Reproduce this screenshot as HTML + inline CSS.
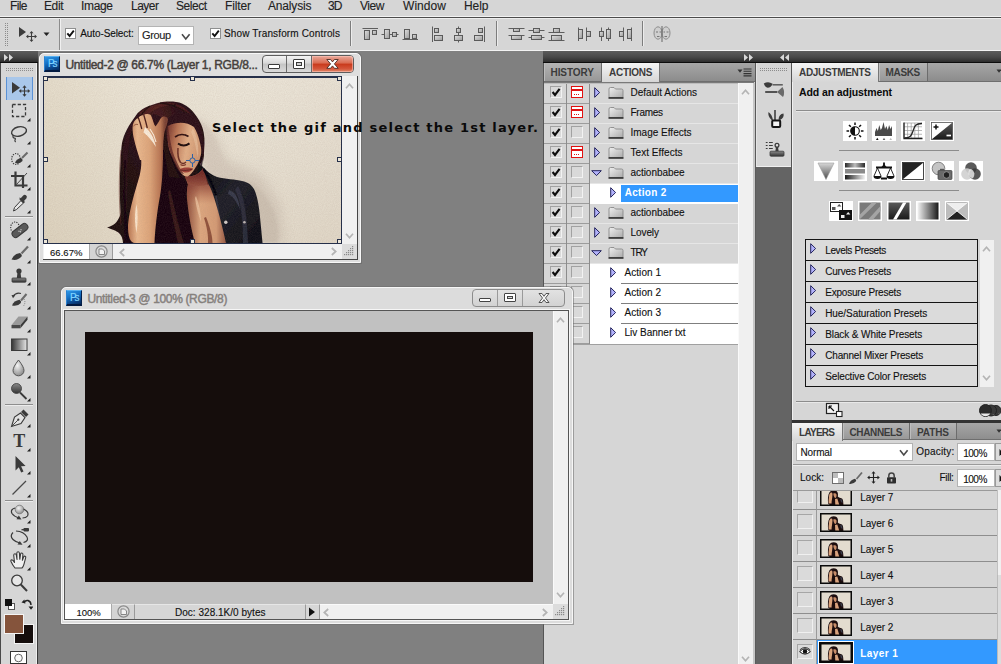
<!DOCTYPE html>
<html lang="en"><head><meta charset="utf-8"><title>Photoshop</title>
<style>
html,body{margin:0;padding:0}
body{width:1001px;height:664px;overflow:hidden;background:#808080;position:relative;
font-family:"Liberation Sans",sans-serif;font-size:10px;color:#111}
#app{position:absolute;left:0;top:0;width:1001px;height:664px;overflow:hidden;background:#808080}
#app div,#app span,#app svg{position:absolute;box-sizing:border-box}
#app span{white-space:nowrap}
</style></head>
<body><div id="app">
<div style="left:0px;top:0px;width:1001px;height:16px;background:#d6d6d6"></div>
<div style="left:0px;top:16px;width:1001px;height:1px;background:#f2f2f2"></div>
<div style="left:0px;top:17px;width:1001px;height:1px;background:#4c4c4c"></div>
<span style="left:10.00px;top:0px;font-size:12px;line-height:12px;color:#222;letter-spacing:-0.612px;-webkit-text-stroke:0.12px #222;">File</span>
<span style="left:44.00px;top:0px;font-size:12px;line-height:12px;color:#222;letter-spacing:-0.393px;-webkit-text-stroke:0.12px #222;">Edit</span>
<span style="left:81.00px;top:0px;font-size:12px;line-height:12px;color:#222;letter-spacing:-0.338px;-webkit-text-stroke:0.12px #222;">Image</span>
<span style="left:131.00px;top:0px;font-size:12px;line-height:12px;color:#222;letter-spacing:-0.505px;-webkit-text-stroke:0.12px #222;">Layer</span>
<span style="left:176.00px;top:0px;font-size:12px;line-height:12px;color:#222;letter-spacing:-0.470px;-webkit-text-stroke:0.12px #222;">Select</span>
<span style="left:225.00px;top:0px;font-size:12px;line-height:12px;color:#222;letter-spacing:-0.133px;-webkit-text-stroke:0.12px #222;">Filter</span>
<span style="left:268.00px;top:0px;font-size:12px;line-height:12px;color:#222;letter-spacing:-0.169px;-webkit-text-stroke:0.12px #222;">Analysis</span>
<span style="left:328.00px;top:0px;font-size:12px;line-height:12px;color:#222;letter-spacing:-0.840px;-webkit-text-stroke:0.12px #222;">3D</span>
<span style="left:360.00px;top:0px;font-size:12px;line-height:12px;color:#222;letter-spacing:-0.431px;-webkit-text-stroke:0.12px #222;">View</span>
<span style="left:403.00px;top:0px;font-size:12px;line-height:12px;color:#222;letter-spacing:0.064px;-webkit-text-stroke:0.12px #222;">Window</span>
<span style="left:464.00px;top:0px;font-size:12px;line-height:12px;color:#222;letter-spacing:-0.060px;-webkit-text-stroke:0.12px #222;">Help</span>
<div style="left:0px;top:18px;width:1001px;height:32px;background:#d6d6d6"></div>
<div style="left:0px;top:18px;width:1001px;height:1px;background:#ececec"></div>
<div style="left:0px;top:50px;width:1001px;height:1px;background:#f2f2f2"></div>
<div style="left:5px;top:23px;width:1px;height:24px;background:repeating-linear-gradient(180deg,#8c8c8c 0 1px,transparent 1px 2px)"></div>
<div style="left:7px;top:23px;width:1px;height:24px;background:repeating-linear-gradient(180deg,#8c8c8c 0 1px,transparent 1px 2px)"></div>
<svg style="left:18px;top:26px;" width="20" height="16" viewBox="0 0 20 16"><path d="M1 1 L1 11 L8 6 Z" fill="#3c3c3c"/><path d="M13.5 6 v9 M9 10.5 h9" stroke="#3c3c3c" stroke-width="1.1" fill="none"/><path d="M13.5 5 l-2 2.3 h4z M13.5 16 l-2 -2.3 h4z M8 10.5 l2.3 -2 v4z M19 10.5 l-2.3 -2 v4z" fill="#3c3c3c"/></svg>
<svg style="left:43px;top:32px;" width="8" height="5" viewBox="0 0 8 5"><path d="M0.5 0.5 h6 l-3 3.6z" fill="#222"/></svg>
<div style="left:59px;top:19px;width:1px;height:31px;background:#8c8c8c"></div>
<div style="left:60px;top:19px;width:1px;height:31px;background:#f0f0f0"></div>
<div style="left:65px;top:28px;width:11px;height:11px;background:#fff;border:1px solid #8e8f8f"></div>
<svg style="left:65px;top:28px;" width="11" height="11" viewBox="0 0 11 11"><path d="M2.3 5.4 L4.6 8 L8.8 2.6" stroke="#111" stroke-width="1.9" fill="none"/></svg>
<span style="left:80.20px;top:29px;font-size:10px;line-height:10px;color:#111;letter-spacing:-0.089px;-webkit-text-stroke:0.12px #111;">Auto-Select:</span>
<div style="left:138px;top:26px;width:56px;height:19px;background:#fff;border:1px solid #b4b4b4"></div>
<span style="left:142.00px;top:30px;font-size:11px;line-height:11px;color:#222;letter-spacing:-0.393px;-webkit-text-stroke:0.12px #222;">Group</span>
<svg style="left:181px;top:33px;" width="10" height="8" viewBox="0 0 10 8"><path d="M1 1.2 L4.8 6 L8.6 1.2" stroke="#4a4a4a" stroke-width="1.6" fill="none"/></svg>
<div style="left:210px;top:28px;width:11px;height:11px;background:#fff;border:1px solid #8e8f8f"></div>
<svg style="left:210px;top:28px;" width="11" height="11" viewBox="0 0 11 11"><path d="M2.3 5.4 L4.6 8 L8.8 2.6" stroke="#111" stroke-width="1.9" fill="none"/></svg>
<span style="left:224.00px;top:29px;font-size:10px;line-height:10px;color:#111;letter-spacing:0.144px;-webkit-text-stroke:0.12px #111;">Show Transform Controls</span>
<div style="left:350px;top:21px;width:1px;height:25px;background:#7d7d7d"></div>
<div style="left:351px;top:21px;width:1px;height:25px;background:#ececec"></div>
<div style="left:496px;top:21px;width:1px;height:25px;background:#7d7d7d"></div>
<div style="left:497px;top:21px;width:1px;height:25px;background:#ececec"></div>
<div style="left:642px;top:21px;width:1px;height:25px;background:#7d7d7d"></div>
<div style="left:643px;top:21px;width:1px;height:25px;background:#ececec"></div>
<svg style="left:362px;top:27px;" width="18" height="14" viewBox="0 0 18 14"><defs><linearGradient id="gb" x1="0" y1="0" x2="1" y2="1"><stop offset="0" stop-color="#e0e0e0"/><stop offset="1" stop-color="#9a9a9a"/></linearGradient></defs><path d="M0.5 1.5 h15.5" stroke="#5e5e5e"/><rect x="2.5" y="3.5" width="5" height="9" fill="url(#gb)" stroke="#5a5a5a" stroke-width="1"/><rect x="10.5" y="3.5" width="4" height="4" fill="url(#gb)" stroke="#5a5a5a" stroke-width="1"/></svg>
<svg style="left:381px;top:27px;" width="18" height="14" viewBox="0 0 18 14"><path d="M0.5 7.5 h17" stroke="#5e5e5e"/><rect x="3.5" y="2.5" width="5" height="9" fill="url(#gb)" stroke="#5a5a5a" stroke-width="1"/><rect x="11.5" y="5.5" width="4" height="4" fill="url(#gb)" stroke="#5a5a5a" stroke-width="1"/></svg>
<svg style="left:402px;top:27px;" width="18" height="14" viewBox="0 0 18 14"><path d="M0.5 12.5 h15.5" stroke="#5e5e5e"/><rect x="2.5" y="2.5" width="5" height="9" fill="url(#gb)" stroke="#5a5a5a" stroke-width="1"/><rect x="10.5" y="7.5" width="4" height="4" fill="url(#gb)" stroke="#5a5a5a" stroke-width="1"/></svg>
<svg style="left:431px;top:26px;" width="14" height="17" viewBox="0 0 14 17"><path d="M1.5 0.5 v15.5" stroke="#5e5e5e"/><rect x="3.5" y="2.5" width="4" height="4" fill="url(#gb)" stroke="#5a5a5a" stroke-width="1"/><rect x="3.5" y="9.5" width="8" height="5" fill="url(#gb)" stroke="#5a5a5a" stroke-width="1"/></svg>
<svg style="left:452px;top:26px;" width="14" height="17" viewBox="0 0 14 17"><path d="M6.5 0.5 v16" stroke="#5e5e5e"/><rect x="4.5" y="2.5" width="4" height="4" fill="url(#gb)" stroke="#5a5a5a" stroke-width="1"/><rect x="2.5" y="9.5" width="8" height="5" fill="url(#gb)" stroke="#5a5a5a" stroke-width="1"/></svg>
<svg style="left:472px;top:26px;" width="14" height="17" viewBox="0 0 14 17"><path d="M12.5 0.5 v15.5" stroke="#5e5e5e"/><rect x="6.5" y="2.5" width="4" height="4" fill="url(#gb)" stroke="#5a5a5a" stroke-width="1"/><rect x="2.5" y="9.5" width="8" height="5" fill="url(#gb)" stroke="#5a5a5a" stroke-width="1"/></svg>
<svg style="left:508px;top:26px;" width="18" height="17" viewBox="0 0 18 17"><path d="M0.5 2.5 h16 M0.5 9.5 h16" stroke="#5e5e5e"/><rect x="5.5" y="2.5" width="6" height="3" fill="url(#gb)" stroke="#5a5a5a" stroke-width="1"/><rect x="3.5" y="9.5" width="10" height="4" fill="url(#gb)" stroke="#5a5a5a" stroke-width="1"/></svg>
<svg style="left:528px;top:26px;" width="18" height="17" viewBox="0 0 18 17"><path d="M0.5 4.5 h16 M0.5 11.5 h16" stroke="#5e5e5e"/><rect x="5.5" y="2.5" width="6" height="4" fill="url(#gb)" stroke="#5a5a5a" stroke-width="1"/><rect x="3.5" y="9.5" width="10" height="4" fill="url(#gb)" stroke="#5a5a5a" stroke-width="1"/></svg>
<svg style="left:548px;top:26px;" width="18" height="17" viewBox="0 0 18 17"><path d="M0.5 6.5 h16 M0.5 14.5 h16" stroke="#5e5e5e"/><rect x="5.5" y="2.5" width="6" height="4" fill="url(#gb)" stroke="#5a5a5a" stroke-width="1"/><rect x="3.5" y="9.5" width="10" height="5" fill="url(#gb)" stroke="#5a5a5a" stroke-width="1"/></svg>
<svg style="left:577px;top:27px;" width="16" height="15" viewBox="0 0 16 15"><path d="M1.5 0.5 v13.5 M9.5 0.5 v13.5" stroke="#5e5e5e"/><rect x="1.5" y="2.5" width="4" height="9" fill="url(#gb)" stroke="#5a5a5a" stroke-width="1"/><rect x="9.5" y="4.5" width="4" height="5" fill="url(#gb)" stroke="#5a5a5a" stroke-width="1"/></svg>
<svg style="left:597px;top:27px;" width="16" height="15" viewBox="0 0 16 15"><path d="M4.5 0.5 v13.5 M11.5 0.5 v13.5" stroke="#5e5e5e"/><rect x="2.5" y="4.5" width="4" height="5" fill="url(#gb)" stroke="#5a5a5a" stroke-width="1"/><rect x="9.5" y="2.5" width="4" height="9" fill="url(#gb)" stroke="#5a5a5a" stroke-width="1"/></svg>
<svg style="left:617px;top:27px;" width="16" height="15" viewBox="0 0 16 15"><path d="M6.5 0.5 v13.5 M14.5 0.5 v13.5" stroke="#5e5e5e"/><rect x="2.5" y="4.5" width="4" height="5" fill="url(#gb)" stroke="#5a5a5a" stroke-width="1"/><rect x="10.5" y="2.5" width="4" height="9" fill="url(#gb)" stroke="#5a5a5a" stroke-width="1"/></svg>
<svg style="left:653px;top:26px;" width="18" height="16" viewBox="0 0 18 16"><ellipse cx="5" cy="7" rx="4" ry="6.2" fill="#cfcfcf" stroke="#8c8c8c"/><ellipse cx="13" cy="7" rx="4" ry="6.2" fill="#cfcfcf" stroke="#8c8c8c"/><path d="M9 0 v16" stroke="#666"/><path d="M3 6 h2 M6.5 6 h1.5 M10.5 6 h1.5 M13.5 6 h2 M4 10.5 h2.5 M11.5 10.5 h2.5" stroke="#777"/></svg>
<div style="left:0px;top:51px;width:38px;height:12px;background:linear-gradient(#5c5c5c,#484848 50%,#2e2e2e 88%,#0c0c0c 92%)"></div>
<svg style="left:4px;top:54px;" width="10" height="7" viewBox="0 0 10 7"><path d="M0 0 l4 3.5 l-4 3.5z M5 0 l4 3.5 l-4 3.5z" fill="#d8d8d8"/></svg>
<div style="left:543px;top:51px;width:458px;height:12px;background:linear-gradient(#5c5c5c,#484848 50%,#2e2e2e 88%,#0c0c0c 92%)"></div>
<svg style="left:744px;top:54px;" width="10" height="7" viewBox="0 0 10 7"><path d="M0 0 l4 3.5 l-4 3.5z M5 0 l4 3.5 l-4 3.5z" fill="#d8d8d8"/></svg>
<svg style="left:780px;top:54px;" width="10" height="7" viewBox="0 0 10 7"><path d="M4 0 l-4 3.5 l4 3.5z M9 0 l-4 3.5 l4 3.5z" fill="#d8d8d8"/></svg>
<div style="left:543px;top:63px;width:458px;height:601px;background:#646464"></div>
<div style="left:0px;top:63px;width:38px;height:601px;background:#d6d6d6;border-left:1px solid #4a4a4a;border-right:1px solid #383838"></div>
<div style="left:36px;top:63px;width:1px;height:601px;background:#efefef"></div>
<div style="left:6px;top:68px;width:28px;height:1px;background:repeating-linear-gradient(90deg,#8c8c8c 0 1px,transparent 1px 2px)"></div>
<div style="left:6px;top:70px;width:28px;height:1px;background:repeating-linear-gradient(90deg,#8c8c8c 0 1px,transparent 1px 2px)"></div>
<div style="left:6px;top:77px;width:27px;height:23px;background:#a9c7ea;border-left:1px solid #5b92d6;border-right:1px solid #5b92d6"></div>
<div style="left:5px;top:216px;width:28px;height:1px;background:#8e8e8e"></div>
<div style="left:5px;top:217px;width:28px;height:1px;background:#ececec"></div>
<div style="left:5px;top:404px;width:28px;height:1px;background:#8e8e8e"></div>
<div style="left:5px;top:405px;width:28px;height:1px;background:#ececec"></div>
<div style="left:5px;top:500px;width:28px;height:1px;background:#8e8e8e"></div>
<div style="left:5px;top:501px;width:28px;height:1px;background:#ececec"></div>
<svg style="left:0px;top:0px;" width="1" height="1" viewBox="0 0 1 1"><defs><linearGradient id="tg" x1="0" y1="0" x2="0" y2="1"><stop offset="0" stop-color="#8a8a8a"/><stop offset="1" stop-color="#333"/></linearGradient><linearGradient id="th" x1="0" y1="0" x2="1" y2="0"><stop offset="0" stop-color="#333"/><stop offset="1" stop-color="#e8e8e8"/></linearGradient><radialGradient id="tr" cx="0.4" cy="0.35" r="0.7"><stop offset="0" stop-color="#f4f4f4"/><stop offset="1" stop-color="#8a8a8a"/></radialGradient></defs></svg>
<svg style="left:7px;top:76.5px;" width="24" height="24" viewBox="0 0 24 24"><path d="M5 5 L5 16.5 L13 10.8 Z" fill="#3a3a3a"/><path d="M17.5 9.5 v9 M13 14 h9" stroke="#3a3a3a" stroke-width="1.1"/><path d="M17.5 8.3 l-2.1 2.4 h4.2z M17.5 19.7 l-2.1 -2.4 h4.2z M11.8 14 l2.4 -2.1 v4.2z M23.2 14 l-2.4 -2.1 v4.2z" fill="#3a3a3a"/></svg>
<svg style="left:7px;top:99px;" width="24" height="24" viewBox="0 0 24 24"><rect x="5.5" y="5.5" width="13" height="12" fill="none" stroke="#3a3a3a" stroke-width="1.3" stroke-dasharray="3.2 2"/></svg>
<svg style="left:26.5px;top:117.5px;" width="4" height="4" viewBox="0 0 4 4"><path d="M3.500 0 V3.500 H0z" fill="#222"/></svg>
<svg style="left:7px;top:122px;" width="24" height="24" viewBox="0 0 24 24"><ellipse cx="12" cy="9.5" rx="7.6" ry="4.6" transform="rotate(-14 12 9.5)" fill="none" stroke="#3a3a3a" stroke-width="1.4"/><path d="M6.5 13 q-1.5 2.5 1 3.2 q1.5 0 0.5 1.8 q-0.6 1.3 0.8 2" fill="none" stroke="#3a3a3a" stroke-width="1.2"/></svg>
<svg style="left:26.5px;top:140.5px;" width="4" height="4" viewBox="0 0 4 4"><path d="M3.500 0 V3.500 H0z" fill="#222"/></svg>
<svg style="left:7px;top:145.5px;" width="24" height="24" viewBox="0 0 24 24"><ellipse cx="9" cy="13" rx="4.3" ry="5.5" fill="none" stroke="#3a3a3a" stroke-width="1.2" stroke-dasharray="1.2 1.2"/><path d="M8 17 q1 -4 6 -5 q2 1 1.5 3 q-3 3.5 -7.500 2z" fill="#3a3a3a"/><path d="M15 12 L20.5 6.5" stroke="#6a6a6a" stroke-width="2"/></svg>
<svg style="left:26.5px;top:164.0px;" width="4" height="4" viewBox="0 0 4 4"><path d="M3.500 0 V3.500 H0z" fill="#222"/></svg>
<svg style="left:7px;top:168px;" width="24" height="24" viewBox="0 0 24 24"><path d="M8.500 3.500 v14 h12 M4 8 h12 v12" fill="none" stroke="#3a3a3a" stroke-width="2.2"/><path d="M9.500 16.500 L20 5" stroke="#3a3a3a" stroke-width="0.9"/></svg>
<svg style="left:26.5px;top:186.5px;" width="4" height="4" viewBox="0 0 4 4"><path d="M3.500 0 V3.500 H0z" fill="#222"/></svg>
<svg style="left:7px;top:191px;" width="24" height="24" viewBox="0 0 24 24"><path d="M6.500 20 l1 -3.500 l6.500 -7 l2.500 2.500 l-7 6.500z" fill="#e6e6e6" stroke="#3a3a3a" stroke-width="1"/><path d="M12.500 8.500 l4 4 l1.500 -1.500 l-1 -1 l2.500 -2.800 q1 -2 -0.500 -3 q-1.500 -1 -2.800 0.300 l-2.500 2.700 l-1 -1z" fill="#3a3a3a"/></svg>
<svg style="left:26.5px;top:209.5px;" width="4" height="4" viewBox="0 0 4 4"><path d="M3.500 0 V3.500 H0z" fill="#222"/></svg>
<svg style="left:7px;top:218px;" width="24" height="24" viewBox="0 0 24 24"><ellipse cx="8" cy="9.500" rx="4.300" ry="5.500" fill="none" stroke="#3a3a3a" stroke-width="1.100" stroke-dasharray="1.200 1.200"/><rect x="4" y="9" width="18" height="7" rx="3.300" transform="rotate(-38 13 12.500)" fill="#5a5a5a" stroke="#3a3a3a"/><circle cx="12" cy="13.300" r="0.700" fill="#ccc"/><circle cx="14" cy="11.700" r="0.700" fill="#ccc"/><circle cx="13.500" cy="13.800" r="0.700" fill="#ccc"/></svg>
<svg style="left:26.5px;top:236.5px;" width="4" height="4" viewBox="0 0 4 4"><path d="M3.500 0 V3.500 H0z" fill="#222"/></svg>
<svg style="left:7px;top:241px;" width="24" height="24" viewBox="0 0 24 24"><path d="M4.500 18.500 q2 -5.500 8.500 -6.500 q2.500 1.500 1.500 3.500 q-4 4.500 -10 3z" fill="#3a3a3a"/><path d="M14.500 12.500 L21 5.500" stroke="#6a6a6a" stroke-width="2.200"/></svg>
<svg style="left:26.5px;top:259.5px;" width="4" height="4" viewBox="0 0 4 4"><path d="M3.500 0 V3.500 H0z" fill="#222"/></svg>
<svg style="left:7px;top:263.5px;" width="24" height="24" viewBox="0 0 24 24"><circle cx="12" cy="7" r="2.600" fill="#3a3a3a"/><path d="M10.600 8 h2.800 l0.800 6 h-4.400z" fill="#3a3a3a"/><rect x="5" y="14" width="14" height="4.200" rx="0.800" fill="url(#tg)" stroke="#3a3a3a" stroke-width="0.800"/></svg>
<svg style="left:26.5px;top:282.0px;" width="4" height="4" viewBox="0 0 4 4"><path d="M3.500 0 V3.500 H0z" fill="#222"/></svg>
<svg style="left:7px;top:287px;" width="24" height="24" viewBox="0 0 24 24"><path d="M5 18.500 q2 -5 7.500 -5.800 q2.300 1.300 1.400 3.200 q-3.600 4 -8.900 2.600z" fill="#3a3a3a"/><path d="M14 13.500 L19.500 7" stroke="#6a6a6a" stroke-width="2"/><path d="M6 9.500 q3 -4.500 8 -3" fill="none" stroke="#3a3a3a" stroke-width="1.200"/><path d="M4.500 8 l3.800 0.300 l-2.300 3z" fill="#3a3a3a"/><path d="M17 12 q2 3.500 -0.500 7" fill="none" stroke="#777" stroke-width="1" stroke-dasharray="1 1.200"/></svg>
<svg style="left:26.5px;top:305.5px;" width="4" height="4" viewBox="0 0 4 4"><path d="M3.500 0 V3.500 H0z" fill="#222"/></svg>
<svg style="left:7px;top:310px;" width="24" height="24" viewBox="0 0 24 24"><path d="M4.500 15 l7 -8.500 h9 l-7 8.500z" fill="#9a9a9a"/><path d="M4.500 15 h9 v3.300 h-9z" fill="#4a4a4a"/><path d="M13.500 15 l7 -8.500 v3.300 l-7 8.500z" fill="#3a3a3a"/></svg>
<svg style="left:26.5px;top:328.5px;" width="4" height="4" viewBox="0 0 4 4"><path d="M3.500 0 V3.500 H0z" fill="#222"/></svg>
<svg style="left:7px;top:333px;" width="24" height="24" viewBox="0 0 24 24"><rect x="4.500" y="6" width="15.500" height="11.500" fill="url(#th)" stroke="#3a3a3a" stroke-width="1"/></svg>
<svg style="left:26.5px;top:351.5px;" width="4" height="4" viewBox="0 0 4 4"><path d="M3.500 0 V3.500 H0z" fill="#222"/></svg>
<svg style="left:7px;top:356px;" width="24" height="24" viewBox="0 0 24 24"><path d="M11.500 4 q5.500 7 5.500 10.500 a5.500 5.300 0 0 1 -11 0 q0 -3.500 5.500 -10.500z" fill="url(#tr)" stroke="#555" stroke-width="1"/></svg>
<svg style="left:26.5px;top:374.5px;" width="4" height="4" viewBox="0 0 4 4"><path d="M3.500 0 V3.500 H0z" fill="#222"/></svg>
<svg style="left:7px;top:379px;" width="24" height="24" viewBox="0 0 24 24"><circle cx="9.500" cy="9.500" r="5" fill="url(#tg)" stroke="#3a3a3a" stroke-width="0.800"/><path d="M13 13.500 L19.500 20" stroke="#3a3a3a" stroke-width="1.800"/></svg>
<svg style="left:26.5px;top:397.5px;" width="4" height="4" viewBox="0 0 4 4"><path d="M3.500 0 V3.500 H0z" fill="#222"/></svg>
<svg style="left:7px;top:405.5px;" width="24" height="24" viewBox="0 0 24 24"><path d="M4.500 20.500 l3 -9.500 l6 -4 l4.500 4.500 l-4 6z" fill="#e2e2e2" stroke="#3a3a3a" stroke-width="1.100"/><path d="M5 20 l5.800 -5.800" stroke="#3a3a3a" stroke-width="0.900"/><circle cx="11.300" cy="13.700" r="1.100" fill="#3a3a3a"/><path d="M14 6 l2.500 -2.500 l5 5 l-2.500 2.500z" fill="#3a3a3a"/></svg>
<svg style="left:26.5px;top:424.0px;" width="4" height="4" viewBox="0 0 4 4"><path d="M3.500 0 V3.500 H0z" fill="#222"/></svg>
<span style="left:13.20px;top:432px;font-size:18px;line-height:18px;color:#3a3a3a;font-weight:700;font-family:'Liberation Serif',serif;">T</span>
<svg style="left:26.5px;top:447.5px;" width="4" height="4" viewBox="0 0 4 4"><path d="M3.500 0 V3.500 H0z" fill="#222"/></svg>
<svg style="left:7px;top:452px;" width="24" height="24" viewBox="0 0 24 24"><path d="M8.500 4 v14.500 l3.300 -3.200 l2.400 5.200 l2.300 -1 l-2.400 -5.200 l4.500 -0.300z" fill="#3a3a3a"/></svg>
<svg style="left:26.5px;top:470.5px;" width="4" height="4" viewBox="0 0 4 4"><path d="M3.500 0 V3.500 H0z" fill="#222"/></svg>
<svg style="left:7px;top:475px;" width="24" height="24" viewBox="0 0 24 24"><path d="M5.500 19.500 L19 6" stroke="#4a4a4a" stroke-width="1.300"/></svg>
<svg style="left:26.5px;top:493.5px;" width="4" height="4" viewBox="0 0 4 4"><path d="M3.500 0 V3.500 H0z" fill="#222"/></svg>
<svg style="left:7px;top:501px;" width="24" height="24" viewBox="0 0 24 24"><circle cx="12.500" cy="8.500" r="4.300" fill="url(#tr)" stroke="#777" stroke-width="0.800"/><path d="M8 7 q-5 1.500 -3 5.500 q2 3 7 4.500 M16.500 8 q6 3 4 7 q-1.500 2 -5 2" fill="none" stroke="#3a3a3a" stroke-width="1.200"/><path d="M14.500 18.500 l-5 -0.300 l2.300 -3.600z" fill="#3a3a3a"/></svg>
<svg style="left:26.5px;top:519.5px;" width="4" height="4" viewBox="0 0 4 4"><path d="M3.500 0 V3.500 H0z" fill="#222"/></svg>
<svg style="left:7px;top:525px;" width="24" height="24" viewBox="0 0 24 24"><path d="M6 7.500 q-3.500 3.500 0 7 q2.500 2.500 7 3.500 M9 6 q8 0.500 11 6 q2 4 -3.500 5.500" fill="none" stroke="#3a3a3a" stroke-width="1.200"/><path d="M15.500 19.800 l-5 -0.300 l2.300 -3.600z" fill="#3a3a3a"/><rect x="16.500" y="3" width="5.500" height="3.400" rx="0.800" fill="#3a3a3a"/><path d="M14.500 4.700 h2.500" stroke="#3a3a3a" stroke-width="1.300"/></svg>
<svg style="left:26.5px;top:543.5px;" width="4" height="4" viewBox="0 0 4 4"><path d="M3.500 0 V3.500 H0z" fill="#222"/></svg>
<svg style="left:7px;top:548px;" width="24" height="24" viewBox="0 0 24 24"><path d="M8 20 q-2.500 -3 -4 -6.500 q-0.500 -1.500 0.800 -1.800 q1.200 0 2.700 2.800 l-0.800 -7.500 q0.200 -1.300 1.300 -1.300 q1 0 1.300 1.200 l0.700 4.600 l-0.200 -6.500 q0.200 -1.200 1.300 -1.200 q1.100 0 1.300 1.200 l0.400 6.300 l0.800 -5.300 q0.300 -1.100 1.300 -1 q1.100 0.200 1 1.400 l-0.500 5.800 l1.300 -3.300 q0.500 -1 1.400 -0.700 q0.900 0.400 0.600 1.500 l-1.700 6.500 q-0.700 2.800 -2 3.800z" fill="#f0f0f0" stroke="#3a3a3a" stroke-width="1.100" stroke-linejoin="round"/></svg>
<svg style="left:26.5px;top:566.5px;" width="4" height="4" viewBox="0 0 4 4"><path d="M3.500 0 V3.500 H0z" fill="#222"/></svg>
<svg style="left:7px;top:571px;" width="24" height="24" viewBox="0 0 24 24"><circle cx="10" cy="9.500" r="5.300" fill="#e6e6e6" stroke="#3a3a3a" stroke-width="1.300"/><path d="M13.800 13.500 L20 20" stroke="#3a3a3a" stroke-width="2"/></svg>
<div style="left:8px;top:603px;width:7px;height:7px;background:#fff;border:1px solid #555"></div>
<div style="left:5px;top:599px;width:7px;height:7px;background:#111;border:1px solid #111"></div>
<svg style="left:21px;top:598px;" width="12" height="12" viewBox="0 0 12 12"><path d="M3 5 q1 -3 4 -2.500 q3 1 3 4.500" fill="none" stroke="#222" stroke-width="1.400"/><path d="M0.500 4.500 l2.800 -3 l1.200 4z M7.500 8.500 h5 l-2.500 3.200z" fill="#222"/></svg>
<div style="left:14px;top:624px;width:20px;height:20px;background:#150d0c;border:1px solid #f4f4f4"></div>
<div style="left:4px;top:614px;width:20px;height:20px;background:#85543c;border:1px solid #f4f4f4"></div>
<div style="left:10px;top:651px;width:17px;height:13px;background:#fff;border:1px solid #333"></div>
<svg style="left:13px;top:653px;" width="11" height="11" viewBox="0 0 11 11"><circle cx="5.500" cy="5" r="3.800" fill="#f8f8f8" stroke="#555" stroke-width="0.900"/></svg>
<div style="left:543px;top:63px;width:213px;height:601px;background:#d6d6d6;border-left:1px solid #555;border-right:1px solid #5a5a5a"></div>
<div style="left:544px;top:63px;width:211px;height:18px;background:linear-gradient(#a6a6a6,#8c8c8c)"></div>
<div style="left:544px;top:63px;width:58px;height:18px;background:linear-gradient(#b4b4b4,#979797);border-right:1px solid #6c6c6c;border-left:1px solid #bdbdbd"></div>
<div style="left:602px;top:63px;width:58px;height:19px;background:linear-gradient(#f4f4f4,#d6d6d6);border-right:1px solid #777"></div>
<div style="left:544px;top:81px;width:58px;height:1px;background:#6e6e6e"></div>
<div style="left:660px;top:81px;width:95px;height:1px;background:#6e6e6e"></div>
<span style="left:550.50px;top:68px;font-size:10px;line-height:10px;color:#3b3b3b;font-weight:700;letter-spacing:-0.066px;">HISTORY</span>
<span style="left:609.00px;top:68px;font-size:10px;line-height:10px;color:#3b3b3b;font-weight:700;letter-spacing:-0.250px;">ACTIONS</span>
<svg style="left:737px;top:68px;" width="15" height="9" viewBox="0 0 15 9"><path d="M0.500 1.500 h5 l-2.500 3.200z" fill="#333"/><path d="M6.500 1 h8 M6.500 3.300 h8 M6.500 5.600 h8 M6.500 7.900 h8" stroke="#333" stroke-width="1.100"/></svg>
<div style="left:544px;top:82px;width:210px;height:2px;background:linear-gradient(#7a7a7a 50%,#bdbdbd 50%)"></div>
<div style="left:738px;top:83px;width:15px;height:581px;background:#f0f0f0;border-left:1px solid #fafafa"></div>
<div style="left:753px;top:83px;width:2px;height:581px;background:#c6c6c6"></div>
<svg style="left:741px;top:89px;" width="9" height="6" viewBox="0 0 9 6"><path d="M1 5.200 L4.500 1.300 L8 5.200" stroke="#b4b4b4" stroke-width="1.700" fill="none"/></svg>
<svg style="left:741px;top:656px;" width="9" height="6" viewBox="0 0 9 6"><path d="M1 0.800 L4.500 4.700 L8 0.800" stroke="#b4b4b4" stroke-width="1.700" fill="none"/></svg>
<svg style="left:0px;top:0px;" width="1" height="1" viewBox="0 0 1 1"><defs><linearGradient id="fg" x1="0" y1="0" x2="1" y2="1"><stop offset="0" stop-color="#f0f0f0"/><stop offset="1" stop-color="#aaaaaa"/></linearGradient></defs></svg>
<div style="left:544px;top:84px;width:22px;height:20px;background:#d6d6d6;border-bottom:1px solid #9c9c9c"></div>
<div style="left:566px;top:84px;width:1px;height:20px;background:#8c8c8c"></div>
<div style="left:567px;top:84px;width:22px;height:20px;background:#d6d6d6;border-bottom:1px solid #9c9c9c"></div>
<div style="left:589px;top:84px;width:1px;height:20px;background:#8c8c8c"></div>
<div style="left:550px;top:86px;width:12px;height:12px;background:#d9d9d9;border:1px solid;border-color:#a2a2a2 #f2f2f2 #f2f2f2 #a2a2a2"></div>
<div style="left:571px;top:86px;width:12px;height:12px;background:#d9d9d9;border:1px solid;border-color:#a2a2a2 #f2f2f2 #f2f2f2 #a2a2a2"></div>
<svg style="left:550px;top:86px;" width="12" height="12" viewBox="0 0 12 12"><path d="M2.600 6 L5 9 L9.600 2.800" stroke="#0c0c0c" stroke-width="2.100" fill="none"/></svg>
<div style="left:571px;top:86px;width:12px;height:12px;background:#fff;border:1.500px solid #e01212"></div>
<div style="left:572px;top:89px;width:10px;height:1.5px;background:#e01212"></div>
<div style="left:574.3px;top:93.5px;width:1.2px;height:1.2px;background:#e01212"></div>
<div style="left:576.3px;top:93.5px;width:1.2px;height:1.2px;background:#e01212"></div>
<div style="left:578.3px;top:93.5px;width:1.2px;height:1.2px;background:#e01212"></div>
<div style="left:590px;top:84px;width:148px;height:20px;background:#d6d6d6;border-bottom:1px solid #e6e6e6"></div>
<svg style="left:594px;top:87px;" width="7" height="11" viewBox="0 0 7 11"><path d="M0.700 0.700 V10.300 L5.600 5.500 Z" fill="#b2b2fa" stroke="#1a1a55" stroke-width="0.950" stroke-linejoin="round"/></svg>
<svg style="left:608px;top:86px;" width="16" height="13" viewBox="0 0 16 13"><path d="M1 11.500 V3 q0 -1.500 1.500 -1.500 h3.500 l1.500 1.500 h6 q1.500 0 1.500 1.500 V11.500 Z" fill="url(#fg)" stroke="#8a8a8a" stroke-width="0.900"/><path d="M0.500 12 h15" stroke="#1c1c1c" stroke-width="1.400"/></svg>
<span style="left:630.50px;top:88px;font-size:10px;line-height:10px;color:#111;letter-spacing:-0.015px;-webkit-text-stroke:0.12px #111;">Default Actions</span>
<div style="left:544px;top:104px;width:22px;height:20px;background:#d6d6d6;border-bottom:1px solid #9c9c9c"></div>
<div style="left:566px;top:104px;width:1px;height:20px;background:#8c8c8c"></div>
<div style="left:567px;top:104px;width:22px;height:20px;background:#d6d6d6;border-bottom:1px solid #9c9c9c"></div>
<div style="left:589px;top:104px;width:1px;height:20px;background:#8c8c8c"></div>
<div style="left:550px;top:106px;width:12px;height:12px;background:#d9d9d9;border:1px solid;border-color:#a2a2a2 #f2f2f2 #f2f2f2 #a2a2a2"></div>
<div style="left:571px;top:106px;width:12px;height:12px;background:#d9d9d9;border:1px solid;border-color:#a2a2a2 #f2f2f2 #f2f2f2 #a2a2a2"></div>
<svg style="left:550px;top:106px;" width="12" height="12" viewBox="0 0 12 12"><path d="M2.600 6 L5 9 L9.600 2.800" stroke="#0c0c0c" stroke-width="2.100" fill="none"/></svg>
<div style="left:571px;top:106px;width:12px;height:12px;background:#fff;border:1.500px solid #e01212"></div>
<div style="left:572px;top:109px;width:10px;height:1.5px;background:#e01212"></div>
<div style="left:574.3px;top:113.5px;width:1.2px;height:1.2px;background:#e01212"></div>
<div style="left:576.3px;top:113.5px;width:1.2px;height:1.2px;background:#e01212"></div>
<div style="left:578.3px;top:113.5px;width:1.2px;height:1.2px;background:#e01212"></div>
<div style="left:590px;top:104px;width:148px;height:20px;background:#d6d6d6;border-bottom:1px solid #e6e6e6"></div>
<svg style="left:594px;top:107px;" width="7" height="11" viewBox="0 0 7 11"><path d="M0.700 0.700 V10.300 L5.600 5.500 Z" fill="#b2b2fa" stroke="#1a1a55" stroke-width="0.950" stroke-linejoin="round"/></svg>
<svg style="left:608px;top:106px;" width="16" height="13" viewBox="0 0 16 13"><path d="M1 11.500 V3 q0 -1.500 1.500 -1.500 h3.500 l1.500 1.500 h6 q1.500 0 1.500 1.500 V11.500 Z" fill="url(#fg)" stroke="#8a8a8a" stroke-width="0.900"/><path d="M0.500 12 h15" stroke="#1c1c1c" stroke-width="1.400"/></svg>
<span style="left:630.50px;top:108px;font-size:10px;line-height:10px;color:#111;letter-spacing:-0.279px;-webkit-text-stroke:0.12px #111;">Frames</span>
<div style="left:544px;top:124px;width:22px;height:20px;background:#d6d6d6;border-bottom:1px solid #9c9c9c"></div>
<div style="left:566px;top:124px;width:1px;height:20px;background:#8c8c8c"></div>
<div style="left:567px;top:124px;width:22px;height:20px;background:#d6d6d6;border-bottom:1px solid #9c9c9c"></div>
<div style="left:589px;top:124px;width:1px;height:20px;background:#8c8c8c"></div>
<div style="left:550px;top:126px;width:12px;height:12px;background:#d9d9d9;border:1px solid;border-color:#a2a2a2 #f2f2f2 #f2f2f2 #a2a2a2"></div>
<div style="left:571px;top:126px;width:12px;height:12px;background:#d9d9d9;border:1px solid;border-color:#a2a2a2 #f2f2f2 #f2f2f2 #a2a2a2"></div>
<svg style="left:550px;top:126px;" width="12" height="12" viewBox="0 0 12 12"><path d="M2.600 6 L5 9 L9.600 2.800" stroke="#0c0c0c" stroke-width="2.100" fill="none"/></svg>
<div style="left:590px;top:124px;width:148px;height:20px;background:#d6d6d6;border-bottom:1px solid #e6e6e6"></div>
<svg style="left:594px;top:127px;" width="7" height="11" viewBox="0 0 7 11"><path d="M0.700 0.700 V10.300 L5.600 5.500 Z" fill="#b2b2fa" stroke="#1a1a55" stroke-width="0.950" stroke-linejoin="round"/></svg>
<svg style="left:608px;top:126px;" width="16" height="13" viewBox="0 0 16 13"><path d="M1 11.500 V3 q0 -1.500 1.500 -1.500 h3.500 l1.500 1.500 h6 q1.500 0 1.500 1.500 V11.500 Z" fill="url(#fg)" stroke="#8a8a8a" stroke-width="0.900"/><path d="M0.500 12 h15" stroke="#1c1c1c" stroke-width="1.400"/></svg>
<span style="left:630.50px;top:128px;font-size:10px;line-height:10px;color:#111;letter-spacing:0.004px;-webkit-text-stroke:0.12px #111;">Image Effects</span>
<div style="left:544px;top:144px;width:22px;height:20px;background:#d6d6d6;border-bottom:1px solid #9c9c9c"></div>
<div style="left:566px;top:144px;width:1px;height:20px;background:#8c8c8c"></div>
<div style="left:567px;top:144px;width:22px;height:20px;background:#d6d6d6;border-bottom:1px solid #9c9c9c"></div>
<div style="left:589px;top:144px;width:1px;height:20px;background:#8c8c8c"></div>
<div style="left:550px;top:146px;width:12px;height:12px;background:#d9d9d9;border:1px solid;border-color:#a2a2a2 #f2f2f2 #f2f2f2 #a2a2a2"></div>
<div style="left:571px;top:146px;width:12px;height:12px;background:#d9d9d9;border:1px solid;border-color:#a2a2a2 #f2f2f2 #f2f2f2 #a2a2a2"></div>
<svg style="left:550px;top:146px;" width="12" height="12" viewBox="0 0 12 12"><path d="M2.600 6 L5 9 L9.600 2.800" stroke="#0c0c0c" stroke-width="2.100" fill="none"/></svg>
<div style="left:571px;top:146px;width:12px;height:12px;background:#fff;border:1.500px solid #e01212"></div>
<div style="left:572px;top:149px;width:10px;height:1.5px;background:#e01212"></div>
<div style="left:574.3px;top:153.5px;width:1.2px;height:1.2px;background:#e01212"></div>
<div style="left:576.3px;top:153.5px;width:1.2px;height:1.2px;background:#e01212"></div>
<div style="left:578.3px;top:153.5px;width:1.2px;height:1.2px;background:#e01212"></div>
<div style="left:590px;top:144px;width:148px;height:20px;background:#d6d6d6;border-bottom:1px solid #e6e6e6"></div>
<svg style="left:594px;top:147px;" width="7" height="11" viewBox="0 0 7 11"><path d="M0.700 0.700 V10.300 L5.600 5.500 Z" fill="#b2b2fa" stroke="#1a1a55" stroke-width="0.950" stroke-linejoin="round"/></svg>
<svg style="left:608px;top:146px;" width="16" height="13" viewBox="0 0 16 13"><path d="M1 11.500 V3 q0 -1.500 1.500 -1.500 h3.500 l1.500 1.500 h6 q1.500 0 1.500 1.500 V11.500 Z" fill="url(#fg)" stroke="#8a8a8a" stroke-width="0.900"/><path d="M0.500 12 h15" stroke="#1c1c1c" stroke-width="1.400"/></svg>
<span style="left:630.50px;top:148px;font-size:10px;line-height:10px;color:#111;letter-spacing:0.045px;-webkit-text-stroke:0.12px #111;">Text Effects</span>
<div style="left:544px;top:164px;width:22px;height:20px;background:#d6d6d6;border-bottom:1px solid #9c9c9c"></div>
<div style="left:566px;top:164px;width:1px;height:20px;background:#8c8c8c"></div>
<div style="left:567px;top:164px;width:22px;height:20px;background:#d6d6d6;border-bottom:1px solid #9c9c9c"></div>
<div style="left:589px;top:164px;width:1px;height:20px;background:#8c8c8c"></div>
<div style="left:550px;top:166px;width:12px;height:12px;background:#d9d9d9;border:1px solid;border-color:#a2a2a2 #f2f2f2 #f2f2f2 #a2a2a2"></div>
<div style="left:571px;top:166px;width:12px;height:12px;background:#d9d9d9;border:1px solid;border-color:#a2a2a2 #f2f2f2 #f2f2f2 #a2a2a2"></div>
<svg style="left:550px;top:166px;" width="12" height="12" viewBox="0 0 12 12"><path d="M2.600 6 L5 9 L9.600 2.800" stroke="#0c0c0c" stroke-width="2.100" fill="none"/></svg>
<div style="left:590px;top:164px;width:148px;height:20px;background:#d6d6d6;border-bottom:1px solid #e6e6e6"></div>
<svg style="left:591px;top:170px;" width="11" height="7" viewBox="0 0 11 7"><path d="M0.700 0.700 H10.300 L5.500 5.600 Z" fill="#b2b2fa" stroke="#1a1a55" stroke-width="0.950" stroke-linejoin="round"/></svg>
<svg style="left:608px;top:166px;" width="16" height="13" viewBox="0 0 16 13"><path d="M1 11.500 V3 q0 -1.500 1.500 -1.500 h3.500 l1.500 1.500 h6 q1.500 0 1.500 1.500 V11.500 Z" fill="url(#fg)" stroke="#8a8a8a" stroke-width="0.900"/><path d="M0.500 12 h15" stroke="#1c1c1c" stroke-width="1.400"/></svg>
<span style="left:630.50px;top:168px;font-size:10px;line-height:10px;color:#111;letter-spacing:-0.049px;-webkit-text-stroke:0.12px #111;">actionbabee</span>
<div style="left:544px;top:184px;width:22px;height:20px;background:#d6d6d6;border-bottom:1px solid #9c9c9c"></div>
<div style="left:566px;top:184px;width:1px;height:20px;background:#8c8c8c"></div>
<div style="left:567px;top:184px;width:22px;height:20px;background:#d6d6d6;border-bottom:1px solid #9c9c9c"></div>
<div style="left:589px;top:184px;width:1px;height:20px;background:#8c8c8c"></div>
<div style="left:550px;top:186px;width:12px;height:12px;background:#d9d9d9;border:1px solid;border-color:#a2a2a2 #f2f2f2 #f2f2f2 #a2a2a2"></div>
<div style="left:571px;top:186px;width:12px;height:12px;background:#d9d9d9;border:1px solid;border-color:#a2a2a2 #f2f2f2 #f2f2f2 #a2a2a2"></div>
<svg style="left:550px;top:186px;" width="12" height="12" viewBox="0 0 12 12"><path d="M2.600 6 L5 9 L9.600 2.800" stroke="#0c0c0c" stroke-width="2.100" fill="none"/></svg>
<div style="left:590px;top:184px;width:148px;height:20px;background:#fff"></div>
<svg style="left:610px;top:187px;" width="7" height="11" viewBox="0 0 7 11"><path d="M0.700 0.700 V10.300 L5.600 5.500 Z" fill="#b2b2fa" stroke="#1a1a55" stroke-width="0.950" stroke-linejoin="round"/></svg>
<div style="left:621px;top:185px;width:117px;height:17px;background:#3399ff"></div>
<span style="left:624.70px;top:188px;font-size:10px;line-height:10px;color:#fff;font-weight:700;letter-spacing:0.293px;">Action 2</span>
<div style="left:544px;top:204px;width:22px;height:20px;background:#d6d6d6;border-bottom:1px solid #9c9c9c"></div>
<div style="left:566px;top:204px;width:1px;height:20px;background:#8c8c8c"></div>
<div style="left:567px;top:204px;width:22px;height:20px;background:#d6d6d6;border-bottom:1px solid #9c9c9c"></div>
<div style="left:589px;top:204px;width:1px;height:20px;background:#8c8c8c"></div>
<div style="left:550px;top:206px;width:12px;height:12px;background:#d9d9d9;border:1px solid;border-color:#a2a2a2 #f2f2f2 #f2f2f2 #a2a2a2"></div>
<div style="left:571px;top:206px;width:12px;height:12px;background:#d9d9d9;border:1px solid;border-color:#a2a2a2 #f2f2f2 #f2f2f2 #a2a2a2"></div>
<svg style="left:550px;top:206px;" width="12" height="12" viewBox="0 0 12 12"><path d="M2.600 6 L5 9 L9.600 2.800" stroke="#0c0c0c" stroke-width="2.100" fill="none"/></svg>
<div style="left:590px;top:204px;width:148px;height:20px;background:#d6d6d6;border-bottom:1px solid #e6e6e6"></div>
<svg style="left:594px;top:207px;" width="7" height="11" viewBox="0 0 7 11"><path d="M0.700 0.700 V10.300 L5.600 5.500 Z" fill="#b2b2fa" stroke="#1a1a55" stroke-width="0.950" stroke-linejoin="round"/></svg>
<svg style="left:608px;top:206px;" width="16" height="13" viewBox="0 0 16 13"><path d="M1 11.500 V3 q0 -1.500 1.500 -1.500 h3.500 l1.500 1.500 h6 q1.500 0 1.500 1.500 V11.500 Z" fill="url(#fg)" stroke="#8a8a8a" stroke-width="0.900"/><path d="M0.500 12 h15" stroke="#1c1c1c" stroke-width="1.400"/></svg>
<span style="left:630.50px;top:208px;font-size:10px;line-height:10px;color:#111;letter-spacing:-0.049px;-webkit-text-stroke:0.12px #111;">actionbabee</span>
<div style="left:544px;top:224px;width:22px;height:20px;background:#d6d6d6;border-bottom:1px solid #9c9c9c"></div>
<div style="left:566px;top:224px;width:1px;height:20px;background:#8c8c8c"></div>
<div style="left:567px;top:224px;width:22px;height:20px;background:#d6d6d6;border-bottom:1px solid #9c9c9c"></div>
<div style="left:589px;top:224px;width:1px;height:20px;background:#8c8c8c"></div>
<div style="left:550px;top:226px;width:12px;height:12px;background:#d9d9d9;border:1px solid;border-color:#a2a2a2 #f2f2f2 #f2f2f2 #a2a2a2"></div>
<div style="left:571px;top:226px;width:12px;height:12px;background:#d9d9d9;border:1px solid;border-color:#a2a2a2 #f2f2f2 #f2f2f2 #a2a2a2"></div>
<svg style="left:550px;top:226px;" width="12" height="12" viewBox="0 0 12 12"><path d="M2.600 6 L5 9 L9.600 2.800" stroke="#0c0c0c" stroke-width="2.100" fill="none"/></svg>
<div style="left:590px;top:224px;width:148px;height:20px;background:#d6d6d6;border-bottom:1px solid #e6e6e6"></div>
<svg style="left:594px;top:227px;" width="7" height="11" viewBox="0 0 7 11"><path d="M0.700 0.700 V10.300 L5.600 5.500 Z" fill="#b2b2fa" stroke="#1a1a55" stroke-width="0.950" stroke-linejoin="round"/></svg>
<svg style="left:608px;top:226px;" width="16" height="13" viewBox="0 0 16 13"><path d="M1 11.500 V3 q0 -1.500 1.500 -1.500 h3.500 l1.500 1.500 h6 q1.500 0 1.500 1.500 V11.500 Z" fill="url(#fg)" stroke="#8a8a8a" stroke-width="0.900"/><path d="M0.500 12 h15" stroke="#1c1c1c" stroke-width="1.400"/></svg>
<span style="left:630.50px;top:228px;font-size:10px;line-height:10px;color:#111;letter-spacing:-0.081px;-webkit-text-stroke:0.12px #111;">Lovely</span>
<div style="left:544px;top:244px;width:22px;height:20px;background:#d6d6d6;border-bottom:1px solid #9c9c9c"></div>
<div style="left:566px;top:244px;width:1px;height:20px;background:#8c8c8c"></div>
<div style="left:567px;top:244px;width:22px;height:20px;background:#d6d6d6;border-bottom:1px solid #9c9c9c"></div>
<div style="left:589px;top:244px;width:1px;height:20px;background:#8c8c8c"></div>
<div style="left:550px;top:246px;width:12px;height:12px;background:#d9d9d9;border:1px solid;border-color:#a2a2a2 #f2f2f2 #f2f2f2 #a2a2a2"></div>
<div style="left:571px;top:246px;width:12px;height:12px;background:#d9d9d9;border:1px solid;border-color:#a2a2a2 #f2f2f2 #f2f2f2 #a2a2a2"></div>
<svg style="left:550px;top:246px;" width="12" height="12" viewBox="0 0 12 12"><path d="M2.600 6 L5 9 L9.600 2.800" stroke="#0c0c0c" stroke-width="2.100" fill="none"/></svg>
<div style="left:590px;top:244px;width:148px;height:20px;background:#d6d6d6;border-bottom:1px solid #e6e6e6"></div>
<svg style="left:591px;top:250px;" width="11" height="7" viewBox="0 0 11 7"><path d="M0.700 0.700 H10.300 L5.500 5.600 Z" fill="#b2b2fa" stroke="#1a1a55" stroke-width="0.950" stroke-linejoin="round"/></svg>
<svg style="left:608px;top:246px;" width="16" height="13" viewBox="0 0 16 13"><path d="M1 11.500 V3 q0 -1.500 1.500 -1.500 h3.500 l1.500 1.500 h6 q1.500 0 1.500 1.500 V11.500 Z" fill="url(#fg)" stroke="#8a8a8a" stroke-width="0.900"/><path d="M0.500 12 h15" stroke="#1c1c1c" stroke-width="1.400"/></svg>
<span style="left:630.50px;top:248px;font-size:10px;line-height:10px;color:#111;letter-spacing:-1.160px;-webkit-text-stroke:0.12px #111;">TRY</span>
<div style="left:544px;top:264px;width:22px;height:20px;background:#d6d6d6;border-bottom:1px solid #9c9c9c"></div>
<div style="left:566px;top:264px;width:1px;height:20px;background:#8c8c8c"></div>
<div style="left:567px;top:264px;width:22px;height:20px;background:#d6d6d6;border-bottom:1px solid #9c9c9c"></div>
<div style="left:589px;top:264px;width:1px;height:20px;background:#8c8c8c"></div>
<div style="left:550px;top:266px;width:12px;height:12px;background:#d9d9d9;border:1px solid;border-color:#a2a2a2 #f2f2f2 #f2f2f2 #a2a2a2"></div>
<div style="left:571px;top:266px;width:12px;height:12px;background:#d9d9d9;border:1px solid;border-color:#a2a2a2 #f2f2f2 #f2f2f2 #a2a2a2"></div>
<svg style="left:550px;top:266px;" width="12" height="12" viewBox="0 0 12 12"><path d="M2.600 6 L5 9 L9.600 2.800" stroke="#0c0c0c" stroke-width="2.100" fill="none"/></svg>
<div style="left:590px;top:264px;width:148px;height:20px;background:#fff"></div>
<svg style="left:610px;top:267px;" width="7" height="11" viewBox="0 0 7 11"><path d="M0.700 0.700 V10.300 L5.600 5.500 Z" fill="#b2b2fa" stroke="#1a1a55" stroke-width="0.950" stroke-linejoin="round"/></svg>
<div style="left:621px;top:283px;width:117px;height:1px;background:#7f7f7f"></div>
<span style="left:624.50px;top:268px;font-size:10px;line-height:10px;color:#111;letter-spacing:0.052px;-webkit-text-stroke:0.12px #111;">Action 1</span>
<div style="left:544px;top:284px;width:22px;height:20px;background:#d6d6d6;border-bottom:1px solid #9c9c9c"></div>
<div style="left:566px;top:284px;width:1px;height:20px;background:#8c8c8c"></div>
<div style="left:567px;top:284px;width:22px;height:20px;background:#d6d6d6;border-bottom:1px solid #9c9c9c"></div>
<div style="left:589px;top:284px;width:1px;height:20px;background:#8c8c8c"></div>
<div style="left:550px;top:286px;width:12px;height:12px;background:#d9d9d9;border:1px solid;border-color:#a2a2a2 #f2f2f2 #f2f2f2 #a2a2a2"></div>
<div style="left:571px;top:286px;width:12px;height:12px;background:#d9d9d9;border:1px solid;border-color:#a2a2a2 #f2f2f2 #f2f2f2 #a2a2a2"></div>
<div style="left:590px;top:284px;width:148px;height:20px;background:#fff"></div>
<svg style="left:610px;top:287px;" width="7" height="11" viewBox="0 0 7 11"><path d="M0.700 0.700 V10.300 L5.600 5.500 Z" fill="#b2b2fa" stroke="#1a1a55" stroke-width="0.950" stroke-linejoin="round"/></svg>
<div style="left:621px;top:303px;width:117px;height:1px;background:#7f7f7f"></div>
<span style="left:624.50px;top:288px;font-size:10px;line-height:10px;color:#111;letter-spacing:0.052px;-webkit-text-stroke:0.12px #111;">Action 2</span>
<div style="left:544px;top:304px;width:22px;height:20px;background:#d6d6d6;border-bottom:1px solid #9c9c9c"></div>
<div style="left:566px;top:304px;width:1px;height:20px;background:#8c8c8c"></div>
<div style="left:567px;top:304px;width:22px;height:20px;background:#d6d6d6;border-bottom:1px solid #9c9c9c"></div>
<div style="left:589px;top:304px;width:1px;height:20px;background:#8c8c8c"></div>
<div style="left:550px;top:306px;width:12px;height:12px;background:#d9d9d9;border:1px solid;border-color:#a2a2a2 #f2f2f2 #f2f2f2 #a2a2a2"></div>
<div style="left:571px;top:306px;width:12px;height:12px;background:#d9d9d9;border:1px solid;border-color:#a2a2a2 #f2f2f2 #f2f2f2 #a2a2a2"></div>
<div style="left:590px;top:304px;width:148px;height:20px;background:#fff"></div>
<svg style="left:610px;top:307px;" width="7" height="11" viewBox="0 0 7 11"><path d="M0.700 0.700 V10.300 L5.600 5.500 Z" fill="#b2b2fa" stroke="#1a1a55" stroke-width="0.950" stroke-linejoin="round"/></svg>
<div style="left:621px;top:323px;width:117px;height:1px;background:#7f7f7f"></div>
<span style="left:624.50px;top:308px;font-size:10px;line-height:10px;color:#111;letter-spacing:0.052px;-webkit-text-stroke:0.12px #111;">Action 3</span>
<div style="left:544px;top:324px;width:22px;height:20px;background:#d6d6d6;border-bottom:1px solid #9c9c9c"></div>
<div style="left:566px;top:324px;width:1px;height:20px;background:#8c8c8c"></div>
<div style="left:567px;top:324px;width:22px;height:20px;background:#d6d6d6;border-bottom:1px solid #9c9c9c"></div>
<div style="left:589px;top:324px;width:1px;height:20px;background:#8c8c8c"></div>
<div style="left:550px;top:326px;width:12px;height:12px;background:#d9d9d9;border:1px solid;border-color:#a2a2a2 #f2f2f2 #f2f2f2 #a2a2a2"></div>
<div style="left:571px;top:326px;width:12px;height:12px;background:#d9d9d9;border:1px solid;border-color:#a2a2a2 #f2f2f2 #f2f2f2 #a2a2a2"></div>
<div style="left:590px;top:324px;width:148px;height:20px;background:#fff"></div>
<svg style="left:610px;top:327px;" width="7" height="11" viewBox="0 0 7 11"><path d="M0.700 0.700 V10.300 L5.600 5.500 Z" fill="#b2b2fa" stroke="#1a1a55" stroke-width="0.950" stroke-linejoin="round"/></svg>
<span style="left:624.50px;top:328px;font-size:10px;line-height:10px;color:#111;letter-spacing:-0.011px;-webkit-text-stroke:0.12px #111;">Liv Banner txt</span>
<div style="left:544px;top:344px;width:194px;height:1px;background:#a0a0a0"></div>
<div style="left:756px;top:63px;width:35px;height:104px;background:#d6d6d6;border-bottom:1px solid #f0f0f0;border-left:1px solid #e4e4e4"></div>
<div style="left:760px;top:68px;width:28px;height:1px;background:repeating-linear-gradient(90deg,#8c8c8c 0 1px,transparent 1px 2px)"></div>
<div style="left:760px;top:70px;width:28px;height:1px;background:repeating-linear-gradient(90deg,#8c8c8c 0 1px,transparent 1px 2px)"></div>
<svg style="left:757px;top:75px;" width="34" height="90" viewBox="0 0 34 90"><path d="M6.800 8.500 q4.500 -2.800 8.800 0.300 q-1.500 4 -5 4 q-2.500 -0.500 -3.800 -4.300z" fill="#3c3c3c"/><path d="M15.500 9.800 h10.300" stroke="#5a5a5a" stroke-width="1.500"/><path d="M8.200 17 h12" stroke="#3c3c3c" stroke-width="1.700"/><path d="M20 17 l5.500 -5 q3 5.500 0.500 10z" fill="#6a6a6a"/><path d="M14.500 45 q-4 -4 -3 -8 q3.500 2.500 4.500 8z M21.500 44.500 q0.500 -5.500 5 -6 q1 4 -3.500 6.500z" fill="#3c3c3c"/><path d="M18 35 v10.500" stroke="#5e5e5e" stroke-width="2"/><rect x="15.200" y="45.500" width="8" height="6.500" rx="1" fill="#f4f4f4" stroke="#151515" stroke-width="2"/><path d="M8.800 67.500 h1.800 M12 67.500 h3.800 M8.800 70.500 h1.800 M12 70.500 h3.800 M8.800 73.500 h1.800 M12 73.500 h3.800" stroke="#3c3c3c" stroke-width="1.200"/><circle cx="20" cy="70.200" r="1.900" fill="#ddd" stroke="#3c3c3c" stroke-width="1.300"/><path d="M19 72 h2 l0.700 4.500 h-3.400z" fill="#3c3c3c"/><rect x="13" y="76.200" width="14" height="5" rx="1" fill="url(#tg)" stroke="#3c3c3c" stroke-width="0.800"/></svg>
<div style="left:791px;top:63px;width:1px;height:601px;background:#555"></div>
<div style="left:792px;top:63px;width:209px;height:357px;background:#d6d6d6;border-left:1px solid #f0f0f0"></div>
<div style="left:792px;top:63px;width:209px;height:18px;background:linear-gradient(#a6a6a6,#8c8c8c)"></div>
<div style="left:792px;top:63px;width:87px;height:19px;background:linear-gradient(#f4f4f4,#d6d6d6);border-right:1px solid #777"></div>
<div style="left:879px;top:63px;width:49px;height:18px;background:linear-gradient(#b4b4b4,#979797);border-right:1px solid #6c6c6c;border-left:1px solid #bdbdbd"></div>
<div style="left:879px;top:81px;width:122px;height:1px;background:#6e6e6e"></div>
<span style="left:799.00px;top:68px;font-size:10px;line-height:10px;color:#3b3b3b;font-weight:700;letter-spacing:-0.301px;">ADJUSTMENTS</span>
<span style="left:885.60px;top:68px;font-size:10px;line-height:10px;color:#3b3b3b;font-weight:700;letter-spacing:-0.379px;">MASKS</span>
<svg style="left:996px;top:68px;" width="15" height="9" viewBox="0 0 15 9"><path d="M0.500 1.500 h5 l-2.500 3.200z" fill="#333"/><path d="M6.500 1 h8 M6.500 3.300 h8 M6.500 5.600 h8 M6.500 7.900 h8" stroke="#333" stroke-width="1.100"/></svg>
<span style="left:799.00px;top:87px;font-size:10.5px;line-height:10.5px;color:#0a0a0a;font-weight:700;letter-spacing:-0.094px;">Add an adjustment</span>
<div style="left:796px;top:110px;width:205px;height:1px;background:#8c8c8c"></div>
<div style="left:796px;top:111px;width:205px;height:1px;background:#e8e8e8"></div>
<div style="left:839px;top:150px;width:120px;height:1px;background:#8c8c8c"></div>
<div style="left:839px;top:190px;width:120px;height:1px;background:#8c8c8c"></div>
<svg style="left:0px;top:0px;" width="1" height="1" viewBox="0 0 1 1"><defs><linearGradient id="a1" x1="0" y1="0" x2="0" y2="1"><stop offset="0" stop-color="#d8d8d8"/><stop offset="1" stop-color="#4a4a4a"/></linearGradient><linearGradient id="a2" x1="0" y1="0" x2="1" y2="0"><stop offset="0" stop-color="#1a1a1a"/><stop offset="1" stop-color="#f4f4f4"/></linearGradient><linearGradient id="a3" x1="0" y1="0" x2="1" y2="0"><stop offset="0" stop-color="#f4f4f4"/><stop offset="1" stop-color="#1a1a1a"/></linearGradient><linearGradient id="a4" x1="0" y1="0" x2="1" y2="0"><stop offset="0" stop-color="#2a2a2a"/><stop offset="0.500" stop-color="#bdbdbd"/><stop offset="1" stop-color="#2a2a2a"/></linearGradient><linearGradient id="a5" x1="0" y1="0" x2="0" y2="1"><stop offset="0" stop-color="#5a5a5a"/><stop offset="1" stop-color="#1a1a1a"/></linearGradient></defs></svg>
<svg style="left:843px;top:121px;" width="24" height="20" viewBox="0 0 24 20"><rect width="24" height="20" fill="#fff"/><path d="M12 10 m0 -8.500 v2.600" stroke="#111" stroke-width="1.500" transform="rotate(0 12 10)"/><path d="M12 10 m0 -8.500 v2.600" stroke="#111" stroke-width="1.500" transform="rotate(45 12 10)"/><path d="M12 10 m0 -8.500 v2.600" stroke="#111" stroke-width="1.500" transform="rotate(90 12 10)"/><path d="M12 10 m0 -8.500 v2.600" stroke="#111" stroke-width="1.500" transform="rotate(135 12 10)"/><path d="M12 10 m0 -8.500 v2.600" stroke="#111" stroke-width="1.500" transform="rotate(180 12 10)"/><path d="M12 10 m0 -8.500 v2.600" stroke="#111" stroke-width="1.500" transform="rotate(225 12 10)"/><path d="M12 10 m0 -8.500 v2.600" stroke="#111" stroke-width="1.500" transform="rotate(270 12 10)"/><path d="M12 10 m0 -8.500 v2.600" stroke="#111" stroke-width="1.500" transform="rotate(315 12 10)"/><circle cx="12" cy="10" r="4.300" fill="#fff" stroke="#111" stroke-width="1.100"/><path d="M12 5.700 a4.300 4.300 0 0 0 0 8.600z" fill="#111"/></svg>
<svg style="left:872px;top:121px;" width="24" height="20" viewBox="0 0 24 20"><rect width="24" height="20" fill="#fff"/><path d="M3 15 V11 l1.500 -4 l1.300 3 l1.500 -6 l1.400 5 l1.300 -2 l1.500 -6 l1.500 7 l1.400 -3 l1.400 4 l1.300 -5 l1.400 4 l1.500 -3 V15 Z" fill="#4a4a4a"/><path d="M4 19 l1.300 -2.300 l1.300 2.300z" fill="#111"/><path d="M10.700 19 l1.300 -2.300 l1.300 2.300z" fill="#666"/><path d="M17.400 19 l1.300 -2.300 l1.300 2.300z" fill="#bbb"/></svg>
<svg style="left:901px;top:121px;" width="24" height="20" viewBox="0 0 24 20"><rect width="24" height="20" fill="#fff"/><path d="M3.0 2 V17 M3 2.00 H21" stroke="#9a9a9a" stroke-width="0.700"/><path d="M6.6 2 V17 M3 5.75 H21" stroke="#9a9a9a" stroke-width="0.700"/><path d="M10.2 2 V17 M3 9.50 H21" stroke="#9a9a9a" stroke-width="0.700"/><path d="M13.8 2 V17 M3 13.25 H21" stroke="#9a9a9a" stroke-width="0.700"/><path d="M17.4 2 V17 M3 17.00 H21" stroke="#9a9a9a" stroke-width="0.700"/><path d="M3 1.500 V17.500 H21.500" fill="none" stroke="#222" stroke-width="1.300"/><path d="M3.500 17 C10 17 10.500 14 12 10 C13.500 5.500 14 2.500 21 2.500" fill="none" stroke="#222" stroke-width="1.300"/></svg>
<svg style="left:930px;top:121px;" width="24" height="20" viewBox="0 0 24 20"><rect width="24" height="20" fill="#fff"/><path d="M22.500 1.500 V18.500 H1.500 Z" fill="url(#a5)"/><rect x="1.500" y="1.500" width="21" height="17" fill="none" stroke="#555" stroke-width="0.800"/><path d="M3.500 6 h5 M6 3.500 v5" stroke="#111" stroke-width="1.500"/><path d="M16.500 14.500 h4.500" stroke="#fff" stroke-width="1.700"/></svg>
<svg style="left:814px;top:161px;" width="24" height="20" viewBox="0 0 24 20"><rect width="24" height="20" fill="#fff"/><path d="M4 2 H20 L12 18.500 Z" fill="url(#a1)" stroke="#9a9a9a" stroke-width="0.600"/></svg>
<svg style="left:843px;top:161px;" width="24" height="20" viewBox="0 0 24 20"><rect width="24" height="20" fill="#fff"/><rect x="2" y="2" width="20" height="4.500" fill="url(#a4)"/><rect x="2" y="8" width="20" height="4.500" fill="#8a8a8a"/><rect x="2" y="14" width="20" height="4.500" fill="url(#a2)"/></svg>
<svg style="left:872px;top:161px;" width="24" height="20" viewBox="0 0 24 20"><rect width="24" height="20" fill="#fff"/><path d="M12 1.500 v3 M4 6.500 h16 M9 17.500 h6" stroke="#111" stroke-width="1.800"/><path d="M12 3 l3 3.500 h-6z" fill="#111"/><path d="M5.500 7 L2 15 M5.500 7 L9 15 M18.500 7 L15 15 M18.500 7 L22 15" stroke="#111" stroke-width="0.900"/><path d="M1.500 15 h8 a4 3 0 0 1 -8 0z M14.500 15 h8 a4 3 0 0 1 -8 0z" fill="#111"/></svg>
<svg style="left:901px;top:161px;" width="24" height="20" viewBox="0 0 24 20"><rect width="24" height="20" fill="#fff"/><path d="M1.500 1.500 H22.500 L1.500 18.500 Z" fill="#222"/><rect x="1.500" y="1.500" width="21" height="17" fill="none" stroke="#333" stroke-width="0.900"/></svg>
<svg style="left:930px;top:161px;" width="24" height="20" viewBox="0 0 24 20"><rect width="24" height="20" fill="#fff"/><circle cx="8.500" cy="7.500" r="6.300" fill="#c4c4c4" stroke="#777" stroke-width="0.900"/><rect x="8" y="9.500" width="14" height="9" rx="1" fill="#6a6a6a" stroke="#444" stroke-width="0.700"/><rect x="10" y="7.800" width="4" height="2" fill="#555"/><circle cx="16.500" cy="14" r="3.300" fill="#222" stroke="#999" stroke-width="0.800"/></svg>
<svg style="left:959px;top:161px;" width="24" height="20" viewBox="0 0 24 20"><rect width="24" height="20" fill="#fff"/><circle cx="12" cy="7" r="5.800" fill="#5a5a5a"/><circle cx="8" cy="13" r="5.800" fill="#cfcfcf" fill-opacity="0.900"/><circle cx="16" cy="13" r="5.800" fill="#3a3a3a" fill-opacity="0.850"/><path d="M12 8 a5.800 5.800 0 0 1 1.500 9.500 a5.800 5.800 0 0 1 -3 -9z" fill="#eee" fill-opacity="0.800"/></svg>
<svg style="left:829px;top:201px;" width="24" height="20" viewBox="0 0 24 20"><rect width="24" height="20" fill="#fff"/><rect x="1.500" y="1.500" width="12" height="9" fill="#fff" stroke="#222" stroke-width="1"/><rect x="3" y="6" width="3.500" height="3" fill="#555"/><path d="M8 5.500 l2.200 -2.500 l2.200 2.500z" fill="#555"/><rect x="10.500" y="9.500" width="12" height="9" fill="#111" stroke="#111" stroke-width="1"/><rect x="12" y="14" width="3.500" height="3" fill="#eee"/><path d="M17 13.500 l2.200 -2.500 l2.200 2.500z" fill="#eee"/></svg>
<svg style="left:858px;top:201px;" width="24" height="20" viewBox="0 0 24 20"><rect width="24" height="20" fill="#fff"/><rect x="1.500" y="1.500" width="21" height="17" fill="#7a7a7a"/><path d="M1.500 14 L14 1.500 H19 L1.500 18.500z M10 18.500 L22.500 5 V10 L15 18.500z" fill="#a4a4a4"/></svg>
<svg style="left:887px;top:201px;" width="24" height="20" viewBox="0 0 24 20"><rect width="24" height="20" fill="#fff"/><rect x="1.500" y="1.500" width="21" height="17" fill="url(#a5)"/><path d="M6 18.500 L16 1.500 H19.500 L9.500 18.500z" fill="#fff"/></svg>
<svg style="left:916px;top:201px;" width="24" height="20" viewBox="0 0 24 20"><rect width="24" height="20" fill="#fff"/><rect x="1.500" y="1.500" width="21" height="17" fill="url(#a3)"/></svg>
<svg style="left:945px;top:201px;" width="24" height="20" viewBox="0 0 24 20"><rect width="24" height="20" fill="#fff"/><rect x="1.500" y="1.500" width="21" height="17" fill="#eee" stroke="#aaa" stroke-width="0.800"/><path d="M1.500 1.500 L12 10 L1.500 18.500z M22.500 1.500 L12 10 L22.500 18.500z" fill="#bdbdbd"/><path d="M1.500 18.500 L12 10 L22.500 18.500z" fill="#222"/><path d="M1.500 1.500 L22.500 18.500 M22.500 1.500 L1.500 18.500" stroke="#fff" stroke-width="0.800"/></svg>
<div style="left:805px;top:239px;width:173px;height:148px;background:#dbdbdb;border:1px solid #141414"></div>
<svg style="left:810px;top:243px;" width="7" height="11" viewBox="0 0 7 11"><path d="M0.700 0.700 V10.300 L5.600 5.500 Z" fill="#b2b2fa" stroke="#1a1a55" stroke-width="0.950" stroke-linejoin="round"/></svg>
<span style="left:825.20px;top:246px;font-size:10px;line-height:10px;color:#111;letter-spacing:-0.353px;-webkit-text-stroke:0.12px #111;">Levels Presets</span>
<div style="left:806px;top:260px;width:171px;height:1px;background:#141414"></div>
<svg style="left:810px;top:264px;" width="7" height="11" viewBox="0 0 7 11"><path d="M0.700 0.700 V10.300 L5.600 5.500 Z" fill="#b2b2fa" stroke="#1a1a55" stroke-width="0.950" stroke-linejoin="round"/></svg>
<span style="left:825.20px;top:267px;font-size:10px;line-height:10px;color:#111;letter-spacing:-0.181px;-webkit-text-stroke:0.12px #111;">Curves Presets</span>
<div style="left:806px;top:281px;width:171px;height:1px;background:#141414"></div>
<svg style="left:810px;top:285px;" width="7" height="11" viewBox="0 0 7 11"><path d="M0.700 0.700 V10.300 L5.600 5.500 Z" fill="#b2b2fa" stroke="#1a1a55" stroke-width="0.950" stroke-linejoin="round"/></svg>
<span style="left:825.20px;top:288px;font-size:10px;line-height:10px;color:#111;letter-spacing:-0.195px;-webkit-text-stroke:0.12px #111;">Exposure Presets</span>
<div style="left:806px;top:302px;width:171px;height:1px;background:#141414"></div>
<svg style="left:810px;top:306px;" width="7" height="11" viewBox="0 0 7 11"><path d="M0.700 0.700 V10.300 L5.600 5.500 Z" fill="#b2b2fa" stroke="#1a1a55" stroke-width="0.950" stroke-linejoin="round"/></svg>
<span style="left:825.20px;top:309px;font-size:10px;line-height:10px;color:#111;letter-spacing:-0.066px;-webkit-text-stroke:0.12px #111;">Hue/Saturation Presets</span>
<div style="left:806px;top:323px;width:171px;height:1px;background:#141414"></div>
<svg style="left:810px;top:327px;" width="7" height="11" viewBox="0 0 7 11"><path d="M0.700 0.700 V10.300 L5.600 5.500 Z" fill="#b2b2fa" stroke="#1a1a55" stroke-width="0.950" stroke-linejoin="round"/></svg>
<span style="left:825.20px;top:330px;font-size:10px;line-height:10px;color:#111;letter-spacing:-0.096px;-webkit-text-stroke:0.12px #111;">Black &amp; White Presets</span>
<div style="left:806px;top:344px;width:171px;height:1px;background:#141414"></div>
<svg style="left:810px;top:348px;" width="7" height="11" viewBox="0 0 7 11"><path d="M0.700 0.700 V10.300 L5.600 5.500 Z" fill="#b2b2fa" stroke="#1a1a55" stroke-width="0.950" stroke-linejoin="round"/></svg>
<span style="left:825.20px;top:351px;font-size:10px;line-height:10px;color:#111;letter-spacing:-0.158px;-webkit-text-stroke:0.12px #111;">Channel Mixer Presets</span>
<div style="left:806px;top:365px;width:171px;height:1px;background:#141414"></div>
<svg style="left:810px;top:369px;" width="7" height="11" viewBox="0 0 7 11"><path d="M0.700 0.700 V10.300 L5.600 5.500 Z" fill="#b2b2fa" stroke="#1a1a55" stroke-width="0.950" stroke-linejoin="round"/></svg>
<span style="left:825.20px;top:372px;font-size:10px;line-height:10px;color:#111;letter-spacing:-0.133px;-webkit-text-stroke:0.12px #111;">Selective Color Presets</span>
<div style="left:980px;top:240px;width:14px;height:147px;background:#f0f0f0"></div>
<svg style="left:982px;top:246px;" width="9" height="6" viewBox="0 0 9 6"><path d="M1 5.200 L4.500 1.300 L8 5.200" stroke="#b4b4b4" stroke-width="1.700" fill="none"/></svg>
<svg style="left:982px;top:375px;" width="9" height="6" viewBox="0 0 9 6"><path d="M1 0.800 L4.500 4.700 L8 0.800" stroke="#b4b4b4" stroke-width="1.700" fill="none"/></svg>
<div style="left:796px;top:401px;width:205px;height:1px;background:#8c8c8c"></div>
<div style="left:796px;top:402px;width:205px;height:1px;background:#e8e8e8"></div>
<svg style="left:825px;top:402px;" width="19" height="16" viewBox="0 0 19 16"><rect x="1.500" y="1.500" width="12" height="10" fill="#f4f4f4" stroke="#222" stroke-width="1.200"/><path d="M4 4 l5 5 M4 4 h3 M4 4 v3" stroke="#111" stroke-width="1.100" fill="none"/><rect x="11.500" y="9.500" width="5.500" height="5" fill="#fff" stroke="#222" stroke-width="1.100"/></svg>
<svg style="left:979px;top:403px;" width="22" height="17" viewBox="0 0 22 17"><circle cx="17" cy="7.500" r="5" fill="#3a3a3a" stroke="#222"/><circle cx="12" cy="7.500" r="5.500" fill="#3a3a3a" stroke="#222"/><circle cx="6.500" cy="7.500" r="6" fill="#2a2a2a" stroke="#222"/><path d="M1.500 10.500 a6 6 0 0 0 10 0 z" fill="#e8e8e8"/><path d="M13 12 a5.500 5.500 0 0 0 3 -1 z M19 11 a5 5 0 0 0 2 -1.500z" fill="#e8e8e8"/></svg>
<div style="left:792px;top:420px;width:209px;height:3px;background:#333"></div>
<div style="left:792px;top:423px;width:209px;height:241px;background:#d6d6d6;border-left:1px solid #ececec"></div>
<div style="left:792px;top:423px;width:209px;height:17px;background:linear-gradient(#a6a6a6,#8c8c8c)"></div>
<div style="left:792px;top:423px;width:51px;height:18px;background:linear-gradient(#f4f4f4,#d6d6d6);border-right:1px solid #777"></div>
<div style="left:843px;top:423px;width:67px;height:17px;background:linear-gradient(#b4b4b4,#979797);border-right:1px solid #6c6c6c;border-left:1px solid #bdbdbd"></div>
<div style="left:910px;top:423px;width:47px;height:17px;background:linear-gradient(#b4b4b4,#979797);border-right:1px solid #6c6c6c;border-left:1px solid #bdbdbd"></div>
<div style="left:843px;top:439px;width:158px;height:1px;background:#6e6e6e"></div>
<span style="left:799.00px;top:428px;font-size:10px;line-height:10px;color:#3b3b3b;font-weight:700;letter-spacing:-0.729px;">LAYERS</span>
<span style="left:849.50px;top:428px;font-size:10px;line-height:10px;color:#3b3b3b;font-weight:700;letter-spacing:-0.366px;">CHANNELS</span>
<span style="left:917.00px;top:428px;font-size:10px;line-height:10px;color:#3b3b3b;font-weight:700;letter-spacing:-0.102px;">PATHS</span>
<svg style="left:996px;top:428px;" width="15" height="9" viewBox="0 0 15 9"><path d="M0.500 1.500 h5 l-2.500 3.200z" fill="#333"/><path d="M6.500 1 h8 M6.500 3.300 h8 M6.500 5.600 h8 M6.500 7.900 h8" stroke="#333" stroke-width="1.100"/></svg>
<div style="left:796px;top:443px;width:117px;height:18px;background:#fff;border:1px solid #b2b2b2"></div>
<span style="left:800.50px;top:448px;font-size:10px;line-height:10px;color:#111;letter-spacing:-0.146px;-webkit-text-stroke:0.12px #111;">Normal</span>
<svg style="left:899px;top:449px;" width="10" height="8" viewBox="0 0 10 8"><path d="M1 1.200 L4.800 6 L8.600 1.200" stroke="#4a4a4a" stroke-width="1.600" fill="none"/></svg>
<span style="left:916.30px;top:447px;font-size:10px;line-height:10px;color:#111;letter-spacing:0.189px;-webkit-text-stroke:0.12px #111;">Opacity:</span>
<div style="left:957px;top:443px;width:38px;height:18px;background:#fff;border:1px solid #b2b2b2"></div>
<span style="left:963.30px;top:449px;font-size:10px;line-height:10px;color:#111;letter-spacing:-0.526px;-webkit-text-stroke:0.12px #111;">100%</span>
<div style="left:995px;top:443px;width:6px;height:18px;background:#dcdcdc;border:1px solid #9a9a9a;border-right:0"></div>
<svg style="left:998.5px;top:449px;" width="4" height="7" viewBox="0 0 4 7"><path d="M0.500 0 L4 3.500 L0.500 7z" fill="#111"/></svg>
<div style="left:793px;top:464px;width:208px;height:1px;background:#9a9a9a"></div>
<div style="left:793px;top:465px;width:208px;height:1px;background:#ececec"></div>
<span style="left:800.00px;top:473px;font-size:10px;line-height:10px;color:#111;letter-spacing:0.025px;-webkit-text-stroke:0.12px #111;">Lock:</span>
<div style="left:832px;top:472px;width:12px;height:12px;background:#fff;border:1px solid #6e6e6e"></div>
<div style="left:833px;top:473px;width:5px;height:5px;background:#bdbdbd"></div>
<div style="left:838px;top:478px;width:5px;height:5px;background:#bdbdbd"></div>
<svg style="left:848px;top:471px;" width="15" height="14" viewBox="0 0 15 14"><path d="M1 13 q1.500 -4.500 6 -5.300 q1.800 1 1 2.600 q-2.800 3.400 -7 2.700z" fill="#3a3a3a"/><path d="M8.500 8 L14 1.500" stroke="#6a6a6a" stroke-width="1.800"/></svg>
<svg style="left:867px;top:471px;" width="13" height="13" viewBox="0 0 13 13"><path d="M6.500 1.500 v10 M1.500 6.500 h10" stroke="#222" stroke-width="1.100"/><path d="M6.500 0.200 l-2 2.400 h4z M6.500 12.800 l-2 -2.400 h4z M0.200 6.500 l2.400 -2 v4z M12.800 6.500 l-2.400 -2 v4z" fill="#222"/></svg>
<svg style="left:886px;top:472px;" width="11" height="12" viewBox="0 0 11 12"><path d="M2.800 5.500 V3.800 a2.700 2.700 0 0 1 5.400 0 V5.500" fill="none" stroke="#444" stroke-width="1.500"/><rect x="1" y="5.300" width="9" height="6.200" rx="0.800" fill="#2e2e2e"/><rect x="4.700" y="7" width="1.600" height="2.600" fill="#bbb"/></svg>
<span style="left:939.40px;top:473px;font-size:10px;line-height:10px;color:#111;letter-spacing:-0.263px;-webkit-text-stroke:0.12px #111;">Fill:</span>
<div style="left:957px;top:469px;width:38px;height:18px;background:#fff;border:1px solid #b2b2b2"></div>
<span style="left:963.30px;top:475px;font-size:10px;line-height:10px;color:#111;letter-spacing:-0.526px;-webkit-text-stroke:0.12px #111;">100%</span>
<div style="left:995px;top:469px;width:6px;height:18px;background:#dcdcdc;border:1px solid #9a9a9a;border-right:0"></div>
<svg style="left:998.5px;top:475px;" width="4" height="7" viewBox="0 0 4 7"><path d="M0.500 0 L4 3.500 L0.500 7z" fill="#111"/></svg>
<svg style="left:0px;top:0px;" width="1" height="1" viewBox="0 0 1 1"><defs><filter id="tb" x="-10%" y="-10%" width="120%" height="120%"><feGaussianBlur stdDeviation="0.350"/></filter></defs></svg>
<div style="left:793px;top:490px;width:204px;height:174px;overflow:hidden">
<div style="left:0px;top:-7px;width:24px;height:26px;background:#d6d6d6;border-top:1px solid #8e8e8e;border-right:1px solid #9a9a9a"></div>
<div style="left:24px;top:-7px;width:180px;height:26px;background:#d6d6d6;border-top:1px solid #8e8e8e"></div>
<div style="left:4px;top:-2px;width:16px;height:15px;background:#dadada;border:1px solid;border-color:#a6a6a6 #f0f0f0 #f0f0f0 #a6a6a6"></div>
<svg style="left:27px;top:-3px;" width="32" height="19" viewBox="0 0 32 19"><rect width="32" height="19" fill="#e3dccf"/><g filter="url(#tb)"><path d="M8.300 17 C7.600 13 7.800 8 9.500 5.200 C11 3 14.500 2.500 16.500 4 C18 5.200 18.300 7.500 17.800 9.500 L19 10.500 L22 11.500 C23.200 12.500 23.300 15 23.400 18 L10 18 Z" fill="#1c0c10"/><path d="M9 9.800 C9 8 9.500 6.500 10.500 5.800 C11.500 5.300 12.300 5.800 12.500 7 L12.300 10 C12 12.500 11.500 14.500 11.600 16.500 L8.800 16.500 C8.300 14.500 8.800 12 9 9.800 Z" fill="#dba47c"/><path d="M13.300 6.500 C14.500 5.800 16 6.200 16.500 7.500 C16.800 9 16.300 10.500 15.300 11.200 C14.300 10.800 13.500 8.800 13.300 6.500 Z" fill="#c98e6a"/><path d="M15 12 L17.300 11.600 L19.300 18 L15.300 18 Z" fill="#d9a27c"/><path d="M20 12 L22 12.500 L22.600 16 L21 15 Z" fill="#3a3c4a"/></g><rect x="0.750" y="0.750" width="30.500" height="17.500" fill="none" stroke="#0a0a0a" stroke-width="1.500"/></svg>
<span style="left:67.30px;top:3px;font-size:10px;line-height:10px;color:#111;letter-spacing:-0.059px;-webkit-text-stroke:0.12px #111;">Layer 7</span>
<div style="left:0px;top:19px;width:24px;height:26px;background:#d6d6d6;border-top:1px solid #8e8e8e;border-right:1px solid #9a9a9a"></div>
<div style="left:24px;top:19px;width:180px;height:26px;background:#d6d6d6;border-top:1px solid #8e8e8e"></div>
<div style="left:4px;top:24px;width:16px;height:15px;background:#dadada;border:1px solid;border-color:#a6a6a6 #f0f0f0 #f0f0f0 #a6a6a6"></div>
<svg style="left:27px;top:23px;" width="32" height="19" viewBox="0 0 32 19"><rect width="32" height="19" fill="#e3dccf"/><g filter="url(#tb)"><path d="M8.300 17 C7.600 13 7.800 8 9.500 5.200 C11 3 14.500 2.500 16.500 4 C18 5.200 18.300 7.500 17.800 9.500 L19 10.500 L22 11.500 C23.200 12.500 23.300 15 23.400 18 L10 18 Z" fill="#1c0c10"/><path d="M9 9.800 C9 8 9.500 6.500 10.500 5.800 C11.500 5.300 12.300 5.800 12.500 7 L12.300 10 C12 12.500 11.500 14.500 11.600 16.500 L8.800 16.500 C8.300 14.500 8.800 12 9 9.800 Z" fill="#dba47c"/><path d="M13.300 6.500 C14.500 5.800 16 6.200 16.500 7.500 C16.800 9 16.300 10.500 15.300 11.200 C14.300 10.800 13.500 8.800 13.300 6.500 Z" fill="#c98e6a"/><path d="M15 12 L17.300 11.600 L19.300 18 L15.300 18 Z" fill="#d9a27c"/><path d="M20 12 L22 12.500 L22.600 16 L21 15 Z" fill="#3a3c4a"/></g><rect x="0.750" y="0.750" width="30.500" height="17.500" fill="none" stroke="#0a0a0a" stroke-width="1.500"/></svg>
<span style="left:67.30px;top:29px;font-size:10px;line-height:10px;color:#111;letter-spacing:-0.059px;-webkit-text-stroke:0.12px #111;">Layer 6</span>
<div style="left:0px;top:45px;width:24px;height:26px;background:#d6d6d6;border-top:1px solid #8e8e8e;border-right:1px solid #9a9a9a"></div>
<div style="left:24px;top:45px;width:180px;height:26px;background:#d6d6d6;border-top:1px solid #8e8e8e"></div>
<div style="left:4px;top:50px;width:16px;height:15px;background:#dadada;border:1px solid;border-color:#a6a6a6 #f0f0f0 #f0f0f0 #a6a6a6"></div>
<svg style="left:27px;top:49px;" width="32" height="19" viewBox="0 0 32 19"><rect width="32" height="19" fill="#e3dccf"/><g filter="url(#tb)"><path d="M8.300 17 C7.600 13 7.800 8 9.500 5.200 C11 3 14.500 2.500 16.500 4 C18 5.200 18.300 7.500 17.800 9.500 L19 10.500 L22 11.500 C23.200 12.500 23.300 15 23.400 18 L10 18 Z" fill="#1c0c10"/><path d="M9 9.800 C9 8 9.500 6.500 10.500 5.800 C11.500 5.300 12.300 5.800 12.500 7 L12.300 10 C12 12.500 11.500 14.500 11.600 16.500 L8.800 16.500 C8.300 14.500 8.800 12 9 9.800 Z" fill="#dba47c"/><path d="M13.300 6.500 C14.500 5.800 16 6.200 16.500 7.500 C16.800 9 16.300 10.500 15.300 11.200 C14.300 10.800 13.500 8.800 13.300 6.500 Z" fill="#c98e6a"/><path d="M15 12 L17.300 11.600 L19.300 18 L15.300 18 Z" fill="#d9a27c"/><path d="M20 12 L22 12.500 L22.600 16 L21 15 Z" fill="#3a3c4a"/></g><rect x="0.750" y="0.750" width="30.500" height="17.500" fill="none" stroke="#0a0a0a" stroke-width="1.500"/></svg>
<span style="left:67.30px;top:55px;font-size:10px;line-height:10px;color:#111;letter-spacing:-0.059px;-webkit-text-stroke:0.12px #111;">Layer 5</span>
<div style="left:0px;top:71px;width:24px;height:26px;background:#d6d6d6;border-top:1px solid #8e8e8e;border-right:1px solid #9a9a9a"></div>
<div style="left:24px;top:71px;width:180px;height:26px;background:#d6d6d6;border-top:1px solid #8e8e8e"></div>
<div style="left:4px;top:76px;width:16px;height:15px;background:#dadada;border:1px solid;border-color:#a6a6a6 #f0f0f0 #f0f0f0 #a6a6a6"></div>
<svg style="left:27px;top:75px;" width="32" height="19" viewBox="0 0 32 19"><rect width="32" height="19" fill="#e3dccf"/><g filter="url(#tb)"><path d="M8.300 17 C7.600 13 7.800 8 9.500 5.200 C11 3 14.500 2.500 16.500 4 C18 5.200 18.300 7.500 17.800 9.500 L19 10.500 L22 11.500 C23.200 12.500 23.300 15 23.400 18 L10 18 Z" fill="#1c0c10"/><path d="M9 9.800 C9 8 9.500 6.500 10.500 5.800 C11.500 5.300 12.300 5.800 12.500 7 L12.300 10 C12 12.500 11.500 14.500 11.600 16.500 L8.800 16.500 C8.300 14.500 8.800 12 9 9.800 Z" fill="#dba47c"/><path d="M13.300 6.500 C14.500 5.800 16 6.200 16.500 7.500 C16.800 9 16.300 10.500 15.300 11.200 C14.300 10.800 13.500 8.800 13.300 6.500 Z" fill="#c98e6a"/><path d="M15 12 L17.300 11.600 L19.300 18 L15.300 18 Z" fill="#d9a27c"/><path d="M20 12 L22 12.500 L22.600 16 L21 15 Z" fill="#3a3c4a"/></g><rect x="0.750" y="0.750" width="30.500" height="17.500" fill="none" stroke="#0a0a0a" stroke-width="1.500"/></svg>
<span style="left:67.30px;top:81px;font-size:10px;line-height:10px;color:#111;letter-spacing:-0.059px;-webkit-text-stroke:0.12px #111;">Layer 4</span>
<div style="left:0px;top:97px;width:24px;height:26px;background:#d6d6d6;border-top:1px solid #8e8e8e;border-right:1px solid #9a9a9a"></div>
<div style="left:24px;top:97px;width:180px;height:26px;background:#d6d6d6;border-top:1px solid #8e8e8e"></div>
<div style="left:4px;top:102px;width:16px;height:15px;background:#dadada;border:1px solid;border-color:#a6a6a6 #f0f0f0 #f0f0f0 #a6a6a6"></div>
<svg style="left:27px;top:101px;" width="32" height="19" viewBox="0 0 32 19"><rect width="32" height="19" fill="#e3dccf"/><g filter="url(#tb)"><path d="M8.300 17 C7.600 13 7.800 8 9.500 5.200 C11 3 14.500 2.500 16.500 4 C18 5.200 18.300 7.500 17.800 9.500 L19 10.500 L22 11.500 C23.200 12.500 23.300 15 23.400 18 L10 18 Z" fill="#1c0c10"/><path d="M9 9.800 C9 8 9.500 6.500 10.500 5.800 C11.500 5.300 12.300 5.800 12.500 7 L12.300 10 C12 12.500 11.500 14.500 11.600 16.500 L8.800 16.500 C8.300 14.500 8.800 12 9 9.800 Z" fill="#dba47c"/><path d="M13.300 6.500 C14.500 5.800 16 6.200 16.500 7.500 C16.800 9 16.300 10.500 15.300 11.200 C14.300 10.800 13.500 8.800 13.300 6.500 Z" fill="#c98e6a"/><path d="M15 12 L17.300 11.600 L19.300 18 L15.300 18 Z" fill="#d9a27c"/><path d="M20 12 L22 12.500 L22.600 16 L21 15 Z" fill="#3a3c4a"/></g><rect x="0.750" y="0.750" width="30.500" height="17.500" fill="none" stroke="#0a0a0a" stroke-width="1.500"/></svg>
<span style="left:67.30px;top:107px;font-size:10px;line-height:10px;color:#111;letter-spacing:-0.059px;-webkit-text-stroke:0.12px #111;">Layer 3</span>
<div style="left:0px;top:123px;width:24px;height:26px;background:#d6d6d6;border-top:1px solid #8e8e8e;border-right:1px solid #9a9a9a"></div>
<div style="left:24px;top:123px;width:180px;height:26px;background:#d6d6d6;border-top:1px solid #8e8e8e"></div>
<div style="left:4px;top:128px;width:16px;height:15px;background:#dadada;border:1px solid;border-color:#a6a6a6 #f0f0f0 #f0f0f0 #a6a6a6"></div>
<svg style="left:27px;top:127px;" width="32" height="19" viewBox="0 0 32 19"><rect width="32" height="19" fill="#e3dccf"/><g filter="url(#tb)"><path d="M8.300 17 C7.600 13 7.800 8 9.500 5.200 C11 3 14.500 2.500 16.500 4 C18 5.200 18.300 7.500 17.800 9.500 L19 10.500 L22 11.500 C23.200 12.500 23.300 15 23.400 18 L10 18 Z" fill="#1c0c10"/><path d="M9 9.800 C9 8 9.500 6.500 10.500 5.800 C11.500 5.300 12.300 5.800 12.500 7 L12.300 10 C12 12.500 11.500 14.500 11.600 16.500 L8.800 16.500 C8.300 14.500 8.800 12 9 9.800 Z" fill="#dba47c"/><path d="M13.300 6.500 C14.500 5.800 16 6.200 16.500 7.500 C16.800 9 16.300 10.500 15.300 11.200 C14.300 10.800 13.500 8.800 13.300 6.500 Z" fill="#c98e6a"/><path d="M15 12 L17.300 11.600 L19.300 18 L15.300 18 Z" fill="#d9a27c"/><path d="M20 12 L22 12.500 L22.600 16 L21 15 Z" fill="#3a3c4a"/></g><rect x="0.750" y="0.750" width="30.500" height="17.500" fill="none" stroke="#0a0a0a" stroke-width="1.500"/></svg>
<span style="left:67.30px;top:133px;font-size:10px;line-height:10px;color:#111;letter-spacing:-0.059px;-webkit-text-stroke:0.12px #111;">Layer 2</span>
<div style="left:0px;top:149px;width:24px;height:26px;background:#d6d6d6;border-top:1px solid #8e8e8e;border-right:1px solid #9a9a9a"></div>
<div style="left:24px;top:149px;width:180px;height:26px;background:#3399ff;border-top:1px solid #8e8e8e"></div>
<div style="left:4px;top:154px;width:16px;height:15px;background:#dadada;border:1px solid;border-color:#a6a6a6 #f0f0f0 #f0f0f0 #a6a6a6"></div>
<div style="left:25px;top:151px;width:36px;height:23px;border:1px solid #fff;background:#0a0a0a"></div>
<svg style="left:27px;top:153px;" width="32" height="19" viewBox="0 0 32 19"><rect width="32" height="19" fill="#e3dccf"/><g filter="url(#tb)"><path d="M8.300 17 C7.600 13 7.800 8 9.500 5.200 C11 3 14.500 2.500 16.500 4 C18 5.200 18.300 7.500 17.800 9.500 L19 10.500 L22 11.500 C23.200 12.500 23.300 15 23.400 18 L10 18 Z" fill="#1c0c10"/><path d="M9 9.800 C9 8 9.500 6.500 10.500 5.800 C11.500 5.300 12.300 5.800 12.500 7 L12.300 10 C12 12.500 11.500 14.500 11.600 16.500 L8.800 16.500 C8.300 14.500 8.800 12 9 9.800 Z" fill="#dba47c"/><path d="M13.300 6.500 C14.500 5.800 16 6.200 16.500 7.500 C16.800 9 16.300 10.500 15.300 11.200 C14.300 10.800 13.500 8.800 13.300 6.500 Z" fill="#c98e6a"/><path d="M15 12 L17.300 11.600 L19.300 18 L15.300 18 Z" fill="#d9a27c"/><path d="M20 12 L22 12.500 L22.600 16 L21 15 Z" fill="#3a3c4a"/></g><rect x="0.750" y="0.750" width="30.500" height="17.500" fill="none" stroke="#0a0a0a" stroke-width="1.500"/></svg>
<span style="left:67.30px;top:159px;font-size:10px;line-height:10px;color:#fff;font-weight:700;letter-spacing:0.413px;">Layer 1</span>
<svg style="left:6px;top:157px;" width="12" height="9" viewBox="0 0 12 9"><path d="M0.600 4.600 Q6 -1 11.400 4.600 Q6 9.600 0.600 4.600z" fill="#fff" stroke="#111" stroke-width="1"/><circle cx="6" cy="4.400" r="2.200" fill="#111"/><path d="M0.800 2.800 Q6 -1.800 11.200 2.800" fill="none" stroke="#111" stroke-width="0.800"/></svg>
</div>
<div style="left:793px;top:490px;width:204px;height:1px;background:#9a9a9a"></div>
<div style="left:997px;top:490px;width:4px;height:174px;background:#f0f0f0;border-left:1px solid #c0c0c0"></div>
<div style="left:997px;top:575px;width:4px;height:89px;background:#dcdcdc;border-left:1px solid #bbb"></div>
<div style="left:61px;top:287px;width:512px;height:337px;background:#dcdcdc;border:1px solid #f6f6f6;border-radius:5px 5px 0 0;box-shadow:0 0 0 1px rgba(110,110,110,.55)"></div>
<div style="left:66px;top:290px;width:16px;height:16px;background:linear-gradient(160deg,#2f97e6 0%,#1470c4 40%,#0a4488 75%,#062a5c 100%);border-right:1px solid #04204a;border-bottom:2px solid #031a40;border-top:1px solid #58b0f0;border-left:1px solid #2a80d0"></div>
<span style="left:70.00px;top:293px;font-size:10px;line-height:10px;color:#7fd4ff;letter-spacing:-2.170px;-webkit-text-stroke:0.2px #7fd4ff;">Ps</span>
<span style="left:87.40px;top:293px;font-size:12px;line-height:12px;color:#85807c;letter-spacing:-0.343px;-webkit-text-stroke:0.45px #85807c;">Untitled-3 @ 100% (RGB/8)</span>
<div style="left:472px;top:289px;width:93px;height:18px;background:linear-gradient(#e2e2e2,#d2d2d2);border:1px solid #8c8c8c;border-radius:4px"></div>
<div style="left:497px;top:290px;width:1px;height:16px;background:#9a9a9a"></div>
<div style="left:522px;top:290px;width:1px;height:16px;background:#9a9a9a"></div>
<div style="left:479px;top:298px;width:12px;height:4px;background:#fff;border:1px solid #444;border-radius:1px"></div>
<div style="left:504px;top:293px;width:12px;height:9px;background:#fff;border:1px solid #444;border-radius:1px"></div>
<div style="left:507px;top:296px;width:6px;height:3px;background:#d8d8d8;border:1px solid #444"></div>
<svg style="left:537px;top:292px;" width="14" height="12" viewBox="0 0 14 12"><path d="M2 1.500 h3 l2 2.800 l2 -2.800 h3 l-3.500 4.500 l3.500 4.500 h-3 l-2 -2.800 l-2 2.800 h-3 l3.500 -4.500z" fill="#f8f8f8" stroke="#444" stroke-width="0.900"/></svg>
<div style="left:63px;top:309px;width:507px;height:312px;border:1px solid #f6f6f6"></div>
<div style="left:64px;top:310px;width:505px;height:310px;background:#c1c1c1;border:1px solid #555"></div>
<div style="left:85px;top:332px;width:448px;height:250px;background:#150d0c"></div>
<div style="left:553px;top:311px;width:15px;height:293px;background:#f0f0f0;border-left:1px solid #fafafa"></div>
<svg style="left:556px;top:317px;" width="9" height="6" viewBox="0 0 9 6"><path d="M1 5.200 L4.500 1.300 L8 5.200" stroke="#b4b4b4" stroke-width="1.700" fill="none"/></svg>
<svg style="left:556px;top:592px;" width="9" height="6" viewBox="0 0 9 6"><path d="M1 0.800 L4.500 4.700 L8 0.800" stroke="#b4b4b4" stroke-width="1.700" fill="none"/></svg>
<div style="left:65px;top:604px;width:503px;height:15px;background:#f0f0f0;border-top:1px solid #fafafa"></div>
<div style="left:65px;top:604px;width:47px;height:15px;background:#fff;border-right:1px solid #aaa"></div>
<span style="left:76.60px;top:608px;font-size:9.5px;line-height:9.5px;color:#111;letter-spacing:-0.099px;-webkit-text-stroke:0.12px #111;">100%</span>
<div style="left:112px;top:604px;width:23px;height:15px;background:#d4d4d4;border-right:1px solid #9a9a9a;border-top:1px solid #e6e6e6"></div>
<svg style="left:117px;top:605px;" width="13" height="13" viewBox="0 0 13 13"><circle cx="6.500" cy="6.500" r="5.600" fill="#dadada" stroke="#8a8a8a" stroke-width="1.200"/><path d="M4 4 h3.500 l2 2 v3.500 h-5.500z" fill="#f2f2f2" stroke="#7a7a7a" stroke-width="0.900"/></svg>
<div style="left:135px;top:604px;width:171px;height:15px;background:#d6d6d6;border-right:1px solid #9a9a9a;border-top:1px solid #e6e6e6"></div>
<span style="left:175.00px;top:608px;font-size:10px;line-height:10px;color:#111;letter-spacing:0.025px;-webkit-text-stroke:0.12px #111;">Doc: 328.1K/0 bytes</span>
<div style="left:306px;top:604px;width:14px;height:15px;background:#d6d6d6;border-right:1px solid #9a9a9a;border-top:1px solid #e6e6e6"></div>
<svg style="left:308px;top:607px;" width="8" height="10" viewBox="0 0 8 10"><path d="M1 0.500 L7 5 L1 9.500z" fill="#111"/></svg>
<svg style="left:323px;top:608px;" width="6" height="9" viewBox="0 0 6 9"><path d="M5.200 1 L1.300 4.500 L5.200 8" stroke="#b4b4b4" stroke-width="1.700" fill="none"/></svg>
<svg style="left:542px;top:608px;" width="6" height="9" viewBox="0 0 6 9"><path d="M0.800 1 L4.700 4.500 L0.800 8" stroke="#b4b4b4" stroke-width="1.700" fill="none"/></svg>
<div style="left:553px;top:604px;width:15px;height:15px;background:#dcdcdc"></div>
<svg style="left:554px;top:605px;" width="13" height="13" viewBox="0 0 13 13"><rect x="1" y="9" width="1.200" height="1.200" fill="#8a8a8a"/><rect x="3" y="7" width="1.200" height="1.200" fill="#8a8a8a"/><rect x="3" y="9" width="1.200" height="1.200" fill="#8a8a8a"/><rect x="5" y="5" width="1.200" height="1.200" fill="#8a8a8a"/><rect x="5" y="7" width="1.200" height="1.200" fill="#8a8a8a"/><rect x="5" y="9" width="1.200" height="1.200" fill="#8a8a8a"/><rect x="7" y="3" width="1.200" height="1.200" fill="#8a8a8a"/><rect x="7" y="5" width="1.200" height="1.200" fill="#8a8a8a"/><rect x="7" y="7" width="1.200" height="1.200" fill="#8a8a8a"/><rect x="7" y="9" width="1.200" height="1.200" fill="#8a8a8a"/><rect x="9" y="1" width="1.200" height="1.200" fill="#8a8a8a"/><rect x="9" y="3" width="1.200" height="1.200" fill="#8a8a8a"/><rect x="9" y="5" width="1.200" height="1.200" fill="#8a8a8a"/><rect x="9" y="7" width="1.200" height="1.200" fill="#8a8a8a"/><rect x="9" y="9" width="1.200" height="1.200" fill="#8a8a8a"/></svg>
<div style="left:39px;top:53px;width:322px;height:210px;background:#dedede;border:1px solid #f8f8f8;border-radius:5px 5px 0 0;box-shadow:0 0 0 1px rgba(100,100,100,.55)"></div>
<div style="left:44px;top:56px;width:16px;height:16px;background:linear-gradient(160deg,#2f97e6 0%,#1470c4 40%,#0a4488 75%,#062a5c 100%);border-right:1px solid #04204a;border-bottom:2px solid #031a40;border-top:1px solid #58b0f0;border-left:1px solid #2a80d0"></div>
<span style="left:48.00px;top:59px;font-size:10px;line-height:10px;color:#7fd4ff;letter-spacing:-2.170px;-webkit-text-stroke:0.2px #7fd4ff;">Ps</span>
<span style="left:65.40px;top:59px;font-size:12px;line-height:12px;color:#45403c;letter-spacing:-0.327px;-webkit-text-stroke:0.45px #45403c;">Untitled-2 @ 66.7% (Layer 1, RGB/8...</span>
<div style="left:262px;top:55px;width:92px;height:18px;background:linear-gradient(#f4f4f4,#d8d8d8 45%,#c4c4c4 50%,#dadada);border:1px solid #5e5e5e;border-radius:4px"></div>
<div style="left:312px;top:56px;width:41px;height:16px;background:linear-gradient(#e9a99b,#d9694f 45%,#c8391b 50%,#d4553a 80%,#e08a6a);border-radius:0 3px 3px 0;box-shadow:inset 0 0 0 1px rgba(255,200,190,.55)"></div>
<div style="left:286px;top:56px;width:1px;height:16px;background:#6a6a6a"></div>
<div style="left:311px;top:56px;width:1px;height:16px;background:#6a6a6a"></div>
<div style="left:268px;top:64px;width:12px;height:5px;background:#fff;border:1px solid #3a3a3a;border-radius:1px"></div>
<div style="left:293px;top:59px;width:12px;height:10px;background:#fff;border:1px solid #3a3a3a;border-radius:1px"></div>
<div style="left:296px;top:62px;width:6px;height:4px;background:#d0d0d0;border:1px solid #3a3a3a"></div>
<svg style="left:325px;top:58px;" width="15" height="12" viewBox="0 0 15 12"><path d="M1.800 1.500 h3.800 l1.900 2.400 l1.900 -2.400 h3.800 l-3.800 4.400 l3.800 4.400 h-3.800 l-1.900 -2.400 l-1.900 2.400 h-3.800 l3.800 -4.400z" fill="#fff" stroke="#4a2a22" stroke-width="0.900"/></svg>
<div style="left:43px;top:76px;width:315px;height:184px;background:#f0f0f0;border-right:1px solid #444;border-bottom:1px solid #444"></div>
<div style="left:342px;top:78px;width:15px;height:166px;background:#f0f0f0"></div>
<svg style="left:345px;top:83px;" width="9" height="6" viewBox="0 0 9 6"><path d="M1 5.200 L4.500 1.300 L8 5.200" stroke="#b4b4b4" stroke-width="1.700" fill="none"/></svg>
<svg style="left:345px;top:233px;" width="9" height="6" viewBox="0 0 9 6"><path d="M1 0.800 L4.500 4.700 L8 0.800" stroke="#b4b4b4" stroke-width="1.700" fill="none"/></svg>
<div style="left:43px;top:244px;width:314px;height:15px;background:#f0f0f0"></div>
<div style="left:44px;top:244px;width:46px;height:15px;background:#fff;border-right:1px solid #aaa"></div>
<span style="left:50.00px;top:248px;font-size:9.5px;line-height:9.5px;color:#111;letter-spacing:0.056px;-webkit-text-stroke:0.12px #111;">66.67%</span>
<div style="left:90px;top:244px;width:23px;height:15px;background:#d4d4d4;border-right:1px solid #9a9a9a"></div>
<svg style="left:95px;top:245px;" width="13" height="13" viewBox="0 0 13 13"><circle cx="6.500" cy="6.500" r="5.600" fill="#dadada" stroke="#8a8a8a" stroke-width="1.200"/><path d="M4 4 h3.500 l2 2 v3.500 h-5.500z" fill="#f2f2f2" stroke="#7a7a7a" stroke-width="0.900"/></svg>
<svg style="left:119px;top:248px;" width="6" height="9" viewBox="0 0 6 9"><path d="M5.200 1 L1.300 4.500 L5.200 8" stroke="#b4b4b4" stroke-width="1.700" fill="none"/></svg>
<svg style="left:331px;top:247px;" width="6" height="9" viewBox="0 0 6 9"><path d="M0.800 1 L4.700 4.500 L0.800 8" stroke="#b4b4b4" stroke-width="1.700" fill="none"/></svg>
<div style="left:342px;top:244px;width:15px;height:15px;background:#dcdcdc"></div>
<svg style="left:343px;top:245px;" width="13" height="13" viewBox="0 0 13 13"><rect x="1" y="9" width="1.200" height="1.200" fill="#8a8a8a"/><rect x="3" y="7" width="1.200" height="1.200" fill="#8a8a8a"/><rect x="3" y="9" width="1.200" height="1.200" fill="#8a8a8a"/><rect x="5" y="5" width="1.200" height="1.200" fill="#8a8a8a"/><rect x="5" y="7" width="1.200" height="1.200" fill="#8a8a8a"/><rect x="5" y="9" width="1.200" height="1.200" fill="#8a8a8a"/><rect x="7" y="3" width="1.200" height="1.200" fill="#8a8a8a"/><rect x="7" y="5" width="1.200" height="1.200" fill="#8a8a8a"/><rect x="7" y="7" width="1.200" height="1.200" fill="#8a8a8a"/><rect x="7" y="9" width="1.200" height="1.200" fill="#8a8a8a"/><rect x="9" y="1" width="1.200" height="1.200" fill="#8a8a8a"/><rect x="9" y="3" width="1.200" height="1.200" fill="#8a8a8a"/><rect x="9" y="5" width="1.200" height="1.200" fill="#8a8a8a"/><rect x="9" y="7" width="1.200" height="1.200" fill="#8a8a8a"/><rect x="9" y="9" width="1.200" height="1.200" fill="#8a8a8a"/></svg>
<svg style="left:44px;top:77px;" width="298" height="166" viewBox="44 77 298 166">
<defs>
<linearGradient id="pbg" x1="0" y1="0" x2="1" y2="0">
 <stop offset="0" stop-color="#e1d8c4"/><stop offset="0.30" stop-color="#e8e0cf"/>
 <stop offset="0.65" stop-color="#e9e2d3"/><stop offset="1" stop-color="#e5ddce"/></linearGradient>
<linearGradient id="pbv" x1="0" y1="0" x2="0" y2="1">
 <stop offset="0" stop-color="#fff" stop-opacity="0.12"/><stop offset="1" stop-color="#b9a58f" stop-opacity="0.12"/></linearGradient>
<linearGradient id="parm" gradientUnits="userSpaceOnUse" x1="128" y1="0" x2="165" y2="0">
 <stop offset="0" stop-color="#b87450"/><stop offset="0.25" stop-color="#eab88e"/><stop offset="0.6" stop-color="#dca378"/><stop offset="0.88" stop-color="#b87452"/><stop offset="1" stop-color="#7a4030"/></linearGradient>
<linearGradient id="phand" x1="0" y1="0" x2="1" y2="1">
 <stop offset="0" stop-color="#c98a62"/><stop offset="0.45" stop-color="#ecc09a"/><stop offset="1" stop-color="#c07c58"/></linearGradient>
<linearGradient id="pface" x1="0" y1="0" x2="1" y2="0.3">
 <stop offset="0" stop-color="#6e2e28"/><stop offset="0.30" stop-color="#b87252"/><stop offset="0.65" stop-color="#e2ae86"/><stop offset="1" stop-color="#cf9670"/></linearGradient>
<linearGradient id="pchest" x1="0" y1="0" x2="1" y2="0">
 <stop offset="0" stop-color="#8e4e3c"/><stop offset="0.35" stop-color="#dca67e"/><stop offset="0.75" stop-color="#d49a74"/><stop offset="1" stop-color="#935642"/></linearGradient>
<linearGradient id="pneck" x1="0" y1="0" x2="0" y2="1">
 <stop offset="0" stop-color="#8a3e34"/><stop offset="1" stop-color="#c98a66"/></linearGradient>
<linearGradient id="pnsh" gradientUnits="userSpaceOnUse" x1="0" y1="174" x2="0" y2="204"><stop offset="0" stop-color="#6e2a26" stop-opacity="0.950"/><stop offset="0.5" stop-color="#8a3e32" stop-opacity="0.600"/><stop offset="1" stop-color="#a85a44" stop-opacity="0"/></linearGradient>
<linearGradient id="pjk" x1="0" y1="0" x2="1" y2="1">
 <stop offset="0" stop-color="#0a090e"/><stop offset="0.45" stop-color="#1d1e28"/><stop offset="1" stop-color="#0c0b12"/></linearGradient>
<radialGradient id="phair" cx="0.45" cy="0.12" r="0.9">
 <stop offset="0" stop-color="#451a1c"/><stop offset="0.28" stop-color="#280d14"/><stop offset="1" stop-color="#15060b"/></radialGradient>
<filter id="pb1" x="-5%" y="-5%" width="110%" height="110%"><feGaussianBlur stdDeviation="0.75"/></filter>
<filter id="pb3" x="-30%" y="-30%" width="160%" height="160%"><feGaussianBlur stdDeviation="6"/></filter>
<filter id="pb2" x="-20%" y="-20%" width="140%" height="140%"><feGaussianBlur stdDeviation="1.8"/></filter>
<filter id="pgrain" x="0" y="0" width="100%" height="100%"><feTurbulence type="fractalNoise" baseFrequency="0.9" numOctaves="2" seed="3" result="n"/>
 <feColorMatrix type="matrix" values="0 0 0 0 0.35  0 0 0 0 0.25  0 0 0 0 0.2  0.9 0 0 -0.42 0"/></filter>
</defs>
<rect x="44" y="77" width="298" height="166" fill="url(#pbg)"/>
<rect x="44" y="77" width="298" height="166" fill="url(#pbv)"/>
<!-- wall shadow behind the figure -->
<g filter="url(#pb3)" opacity="0.35">
 <path d="M196 118 L214 132 L226 160 L262 176 L280 205 L284 243 L225 243 L205 175 Z" fill="#b3a294"/>
</g>
<g filter="url(#pb2)" opacity="0.850">
 <path d="M250 182 C258 186 266 196 271 206 C277 216 279 228 278 243 L256 243 Z" fill="#cbbfb0"/>
 <path d="M198 118 C206 124 214 134 218 146 C222 158 226 166 236 174 L210 176 L202 150 Z" fill="#d6cbbd" opacity="0.800"/>
</g>
<g filter="url(#pb1)">
<!-- hair back mass -->
<path d="M123 243 C120.500 222 119.500 196 120 176 C120.500 160 121 150 122 143 C124 134 128 126 137.700 113 C144 107 152 104.600 160 102.500 C166 101 176 101 182 103.400 C188 106 192 110 194 113 C198 118 201 123 202.500 128 C204.500 134 205 142 204 150 C203.500 157 202 161 200.400 164 L199 171 L196 182 L190 243 Z" fill="url(#phair)"/>
<!-- hair wisps left -->
<path d="M124 198 C121 212 121 224 107 227.500 C116 231 121 231 124 243 Z" fill="#1c0a0e"/>
<path d="M121 150 C119 170 118.500 200 121 225" stroke="#5a2a22" stroke-width="0.800" fill="none" opacity="0.700"/>
<!-- hair highlights -->
<path d="M139 113 C150 104.500 166 101.500 178 104 C168 104.500 152 108 143 119 Z" fill="#6a2c24" opacity="0.450"/>
<path d="M123 152 C124 136 130 124 138 114.500 C132 127 128.500 140 127.500 160 C127 180 127.500 200 126.500 216 C123.500 196 122 172 123 152 Z" fill="#40181a" opacity="0.350"/>
<path d="M176 104 C186 107 195 116 199 128 C193 119 186 112 176 108 Z" fill="#4a1a1c" opacity="0.900"/>
<path d="M150 106 C142 112 134 124 130 140" stroke="#14050a" stroke-width="1.400" fill="none" opacity="0.700"/>
<path d="M160 103 C170 104 184 108 194 120" stroke="#14050a" stroke-width="1.600" fill="none" opacity="0.700"/>
<path d="M125 160 C124 185 125 215 127 240" stroke="#10040a" stroke-width="2" fill="none" opacity="0.800"/>
<path d="M199 126 C203 138 204 152 201 166" stroke="#10040a" stroke-width="2" fill="none" opacity="0.800"/>
<!-- jacket right -->
<path d="M198 164 L202 166 C206 171 212 175 217 177 C225 179 236 179.500 242 181 C248 182 252 185 254.500 190 C258 198 259.500 210 260.500 222 L262.500 243 L206 243 L204 200 L197 176 Z" fill="url(#pjk)"/>
<path d="M229 190 C235 192 239 198 240 210 C237 202 233 196 228 194 Z" fill="#3c3f52" opacity="0.800"/>
<path d="M238 186 C244 196 247 215 248 243 L243 243 C243 220 241 200 235 190 Z" fill="#2e3040" opacity="0.800"/>
<path d="M216 196 C218 206 220 222 221 243" stroke="#30323f" stroke-width="1.600" fill="none" opacity="0.900"/>
<!-- dark hair between arm and chest -->
<path d="M158 150 L172 150 L182 176 L190 186 L196 243 L150 243 Z" fill="#12050a"/>
<path d="M170 190 C174 205 178 225 184 243 L178 243 C174 225 170 208 168 192 Z" fill="#3a141a" opacity="0.900"/>
<!-- neck -->
<path d="M184 174 C190 178 198 176 203 168.500 L208 186 L190 190 Z" fill="url(#pneck)"/>
<!-- chest -->
<path d="M188 184 C194 187 202 186 208.500 184.500 C212 190 217 206 221 222 C223 230 225 238 226 243 L195 243 C192 232 189 218 187.500 204 C186.500 196 186.500 190 188 184 Z" fill="url(#pchest)"/>
<path d="M184 174 C190 178 198 176 203 168.500 L209 185 C212 191 215 198 217 206 L188 206 C186.500 198 186.500 190 188 184 Z" fill="url(#pnsh)"/>
<path d="M204 218 C207 227 208.500 236 208 243 L212.500 243 C212.500 235 209.500 226 206 217 Z" fill="#83432f" opacity="0.850"/>
<path d="M196 196 C199 204 201 212 201 222 C198 214 196 206 195 198 Z" fill="#f0c8a4" opacity="0.700"/>
<!-- face -->
<path d="M168 124 C174 120.500 188 120 195 123 C199 128 201.500 138 201.600 149 C201.500 156 199 163 194 170 C191 174 189 176.500 187 176.500 C183 176.500 180 172 177.500 167 C175 162 172.700 158 170 152 C167.500 145 167 134 168 124 Z" fill="url(#pface)"/>
<!-- face features -->
<path d="M168 126 C170 138 171 150 176 160 C178 165 181 170 184 174 C180 174 177 169 174.500 163 C171 156 168 146 167.500 136 Z" fill="#5a2220" opacity="0.750"/>
<path d="M175 137 C179 134 184.500 134 188.500 136.500" stroke="#2e100f" stroke-width="1.800" fill="none"/>
<path d="M178 143.500 C181.500 146 186 146 189.500 143.300" stroke="#1e0a0a" stroke-width="2.100" fill="none"/>
<path d="M178 148 C177.500 154 178 159 180.500 162.500 C182.500 164 184.500 163.500 186 162" stroke="#6a2e24" stroke-width="1.500" fill="none"/>
<path d="M180.500 164.500 C182 165.500 184 165.500 186 164.500" stroke="#7a3428" stroke-width="1.200" fill="none"/>
<path d="M179.500 169.500 C183 167 189 167 193 168.800 C190 173.500 183.500 174 179.500 169.500 Z" fill="#9c3e34"/>
<path d="M180 170 C184 170.800 189 170.500 192.500 169" stroke="#5a1e1c" stroke-width="0.900" fill="none"/>
<path d="M193 128 C197 136 199 146 198 158 C196 150 195 140 191 132 Z" fill="#f2cfae" opacity="0.450"/>
<!-- hair over forehead / right side -->
<path d="M166 120 C175 110 191 110 198 120 C203 130 206 146 203 162 C202 150 199.500 136 194 127 C187 121.500 176 121.500 168 126 Z" fill="#2a0f14"/>
<path d="M163 117 C166 130 167 148 171 158 C173.500 165 176 171 180 178 L169 177 C165 160 162.500 140 161.500 124 Z" fill="#200a0e"/>
<!-- arm -->
<path d="M139 150 C142 158 142 166 139.500 176 C135 192 129.500 208 128 225 C127.800 236 130 243 135 243 L154.500 243 C155 230 157 212 160 196 C162 184 163 170 163 150 Z" fill="url(#parm)"/>
<!-- hand -->
<path d="M132.900 124.500 C134 121 136 118.500 138.500 118 C139.500 116 141.500 115 143.500 115.300 C145 113.800 148.500 113.600 150.500 114.800 C152 117 153 121 154.600 125.500 C156.500 123 159 119 162.500 116.700 C165 115.800 167.500 117 168 119.500 C167.500 124 165.500 128 164.500 132 C163.500 138 163 146 163 152 L163 160 L140 160 C137.500 152 135 144 133.500 137 C132.500 132 132.300 128 132.900 124.500 Z" fill="url(#parm)"/>
<path d="M145 127 C149.500 131 154 136.500 156 147 C152 140.500 148 136 143.500 132.500 Z" fill="#fbeedd" opacity="0.950"/>
<path d="M150 129 C153 133 155 137 156 142" stroke="#fff6ea" stroke-width="1.100" fill="none" opacity="0.900"/>
<path d="M151.500 115 C153 119 154 123 155.500 126.500 C157.500 124 159.500 120.500 161 117.500 C158 113.800 154 113.500 151.500 115 Z" fill="#2a0f14"/>
<path d="M138.300 117.500 C139.800 121.500 140.800 125 141.800 129" stroke="#4a1c18" stroke-width="1.300" fill="none"/>
<path d="M143.800 115 C145.300 120 146.300 123.500 147.300 128" stroke="#4a1c18" stroke-width="1.300" fill="none"/>
<path d="M133.500 126 C135 124.500 136.500 124 138 124.500" stroke="#8a4a36" stroke-width="0.900" fill="none"/>
<!-- arm shine -->
<path d="M136.500 204 C138 212 138 222 136.500 233 C134.500 224 134.500 212 136.500 204 Z" fill="#fdebd6" opacity="0.850"/>
<!-- jacket buttons -->
<circle cx="225.800" cy="222.300" r="1.700" fill="#d2cbc8"/><circle cx="244.400" cy="222.300" r="1.300" fill="#bcb5b2"/>
<!-- collar line -->
<path d="M203.500 169 C209 177 213.500 186 216 195" stroke="#040308" stroke-width="2.400" fill="none"/>
</g>
<rect x="44" y="77" width="298" height="166" filter="url(#pgrain)" opacity="0.220"/>
</svg>
<div style="left:43px;top:76px;width:299px;height:168px;border:1px solid #26304a;border-top-width:2px"></div>
<div style="left:43px;top:76px;width:5px;height:5px;background:#ece6d8;border:1px solid #26304a"></div>
<div style="left:190px;top:76px;width:5px;height:5px;background:#ece6d8;border:1px solid #26304a"></div>
<div style="left:337px;top:76px;width:5px;height:5px;background:#ece6d8;border:1px solid #26304a"></div>
<div style="left:43px;top:157px;width:5px;height:5px;background:#ece6d8;border:1px solid #26304a"></div>
<div style="left:337px;top:157px;width:5px;height:5px;background:#ece6d8;border:1px solid #26304a"></div>
<div style="left:43px;top:239px;width:5px;height:5px;background:#ece6d8;border:1px solid #26304a"></div>
<div style="left:190px;top:239px;width:5px;height:5px;background:#ece6d8;border:1px solid #26304a"></div>
<div style="left:337px;top:239px;width:5px;height:5px;background:#ece6d8;border:1px solid #26304a"></div>
<svg style="left:186px;top:154px;" width="13" height="13" viewBox="0 0 13 13"><circle cx="6.500" cy="6.500" r="2.600" fill="none" stroke="#2a62a8" stroke-width="1"/><path d="M6.500 0 v4 M6.500 9 v4 M0 6.500 h4 M9 6.500 h4" stroke="#2a62a8" stroke-width="1"/></svg>
<span style="left:212.00px;top:121px;font-size:13px;line-height:13px;color:#0a0a0a;font-weight:700;font-family:'DejaVu Sans','Liberation Sans',sans-serif;letter-spacing:1.212px;">Select the gif and select the 1st layer.</span>
</div></body></html>
